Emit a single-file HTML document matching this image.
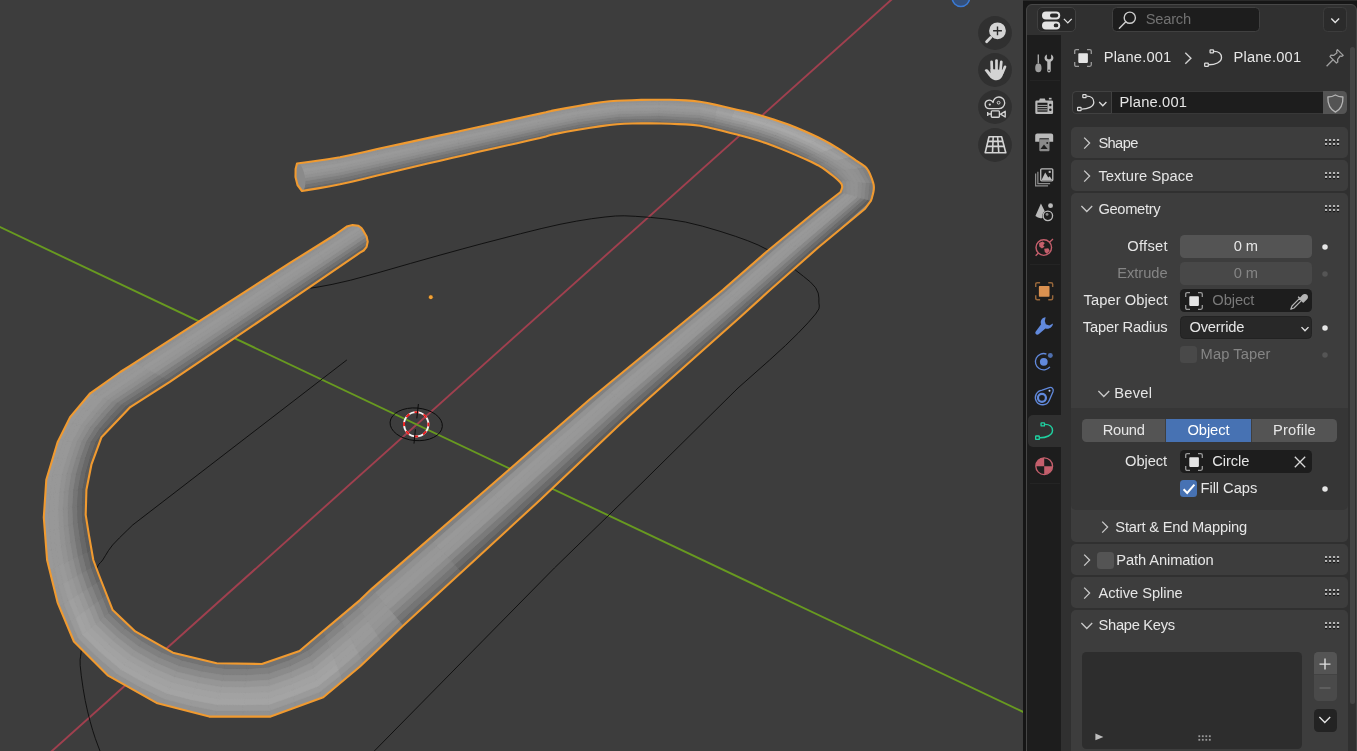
<!DOCTYPE html>
<html>
<head>
<meta charset="utf-8">
<title>Blender</title>
<style>
*{box-sizing:border-box;margin:0;padding:0}
html,body{width:1357px;height:751px;overflow:hidden;background:#181818;font-family:"Liberation Sans",sans-serif;font-size:14.7px;color:#e6e6e6}
.abs{position:absolute}
#vp{position:absolute;left:0;top:0;width:1023px;height:751px;background:#3d3d3d;overflow:hidden}
#gap{position:absolute;left:1023px;top:0;width:4px;height:751px;background:#161616}
#topgap{position:absolute;left:1023px;top:0;width:334px;height:4px;background:#161616;border-top:1px solid #2a2a2a}
#props{position:absolute;left:1026px;top:4px;width:331px;height:760px;background:#303030;border:1px solid #474747;border-radius:6px 6px 0 0;overflow:hidden}
#tabs{position:absolute;left:1027px;top:35px;width:34px;height:716px;background:#1d1d1d}
.t{position:absolute;white-space:nowrap;line-height:18px;height:18px}
.r{text-align:right}
.dis{color:#858585}
.panel{position:absolute;left:1071px;width:277px;background:#3d3d3d;border-radius:5px}
.fld{position:absolute;border-radius:4.5px;height:23.5px}
.dot{position:absolute;width:5.4px;height:5.4px;border-radius:50%;background:#e6e6e6}
.grip{position:absolute;left:1325px;width:15px;height:7px}
svg{position:absolute;overflow:visible}
</style>
</head>
<body>
<div id="vp">
<svg id="scene" width="1023" height="751" viewBox="0 0 1023 751" style="left:0;top:0">
<defs><clipPath id="tc"><path d="M297.0,163.5 L304.6,162.5 L315.4,161.0 L327.8,159.2 L340.0,157.2 L352.0,154.8 L364.6,152.0 L377.3,149.1 L390.0,146.3 L402.5,143.6 L415.1,140.9 L427.7,138.1 L440.2,135.4 L452.7,132.7 L465.1,129.9 L477.5,127.2 L490.0,124.5 L503.3,121.6 L517.1,118.6 L529.8,115.8 L540.0,113.6 L545.9,112.3 L548.8,111.5 L551.4,110.9 L556.8,109.9 L566.3,108.1 L578.1,106.0 L590.3,103.9 L601.1,102.3 L609.6,101.3 L616.9,100.8 L624.1,100.5 L632.0,100.2 L641.3,99.9 L651.2,99.7 L661.2,99.7 L670.3,99.8 L678.3,100.0 L685.7,100.4 L692.8,100.9 L700.0,101.8 L707.4,103.0 L714.8,104.6 L722.1,106.3 L729.5,108.0 L736.9,109.7 L744.3,111.3 L751.6,113.1 L759.0,115.1 L766.4,117.2 L773.7,119.5 L781.0,122.0 L788.4,124.6 L795.9,127.5 L803.6,130.7 L811.0,134.0 L817.9,137.2 L824.1,140.4 L829.8,143.5 L835.1,146.7 L840.0,149.7 L844.6,152.6 L848.8,155.5 L852.7,158.2 L856.2,160.7 L859.3,162.7 L862.0,164.4 L864.4,166.1 L866.5,168.1 L868.2,170.5 L869.6,173.2 L870.7,175.9 L871.7,178.4 L872.5,180.7 L873.2,182.9 L873.7,185.1 L873.9,187.3 L873.8,189.6 L873.4,192.0 L872.9,194.2 L872.4,196.1 L872.0,197.6 L871.6,198.9 L871.2,199.9 L871.0,200.6 L865.1,208.7 L817.9,247.8 L770.0,290.0 L740.0,317.3 L646.9,400.0 L620.0,424.3 L540.0,500.0 L474.8,560.0 L403.0,625.8 L360.0,666.5 L323.3,697.3 L270.6,716.6 L209.2,716.6 L156.6,702.9 L107.7,675.3 L73.9,641.5 L57.6,602.6 L47.1,560.0 L43.8,517.4 L46.3,479.8 L57.6,442.2 L70.1,417.1 L90.2,393.3 L120.3,372.0 L130.0,365.8 L290.0,262.9 L334.7,235.0 L346.7,226.6 L352.6,225.1 L358.5,225.8 L361.5,228.0 L363.7,231.4 L366.6,236.5 L367.7,241.7 L366.6,246.8 L363.7,250.5 L360.0,252.7 L303.4,291.4 L169.8,381.9 L130.3,407.1 L101.5,437.2 L91.4,464.7 L86.4,489.8 L85.7,514.9 L88.9,534.9 L93.3,560.0 L98.9,575.0 L112.7,610.1 L135.3,631.4 L172.9,652.7 L216.7,663.3 L261.9,664.0 L299.5,651.0 L360.0,600.1 L372.0,588.6 L474.2,500.0 L589.0,400.0 L722.8,290.0 L767.8,250.7 L817.9,209.5 L840.0,192.5 L840.1,192.5 L840.3,192.4 L840.5,192.2 L840.7,191.7 L841.1,190.7 L841.6,189.3 L842.1,187.8 L842.2,186.5 L842.0,185.4 L841.7,184.4 L841.0,183.3 L840.0,182.1 L838.7,180.7 L837.1,179.2 L835.1,177.5 L832.6,175.5 L829.8,173.3 L826.6,170.8 L822.8,168.1 L817.9,165.2 L811.6,162.0 L804.1,158.6 L796.1,155.1 L788.4,151.9 L781.0,148.9 L773.7,146.0 L766.4,143.3 L759.0,140.8 L751.6,138.5 L744.3,136.5 L736.9,134.6 L729.5,132.7 L722.1,130.8 L714.8,128.9 L707.4,127.2 L700.0,125.8 L692.8,124.9 L685.7,124.4 L678.3,124.1 L670.3,123.8 L661.2,123.5 L651.2,123.4 L641.3,123.3 L632.0,123.5 L624.1,123.8 L616.9,124.3 L609.6,125.0 L601.1,126.1 L590.3,127.7 L578.1,129.7 L566.3,131.8 L556.8,133.6 L551.4,134.8 L548.8,135.6 L545.9,136.5 L540.0,138.0 L529.8,140.3 L517.1,143.2 L503.3,146.3 L490.0,149.3 L477.5,152.1 L465.1,155.0 L452.7,157.8 L440.2,160.7 L427.7,163.6 L415.1,166.6 L402.5,169.5 L390.0,172.5 L377.2,175.6 L364.2,178.7 L351.7,181.7 L340.0,184.3 L328.8,186.5 L317.9,188.4 L308.5,189.9 L302.0,191.0 L297.5,185.0 L295.5,177.0 L295.6,169.0 Z"/></clipPath></defs>
<path d="M40.0,761.7 L900.0,-8.0" stroke="#a0404f" stroke-width="1.9" fill="none"/>
<path d="M-5.0,224.7 L1030.0,715.2" stroke="#689a20" stroke-width="1.9" fill="none"/>
<path d="M310.5,288.2 L319.1,286.8 L332.1,284.4 L350.6,280.2 L377.8,272.8 L410.6,263.4 L440.0,255.1 L462.2,249.0 L481.1,243.9 L500.0,239.0 L520.6,233.7 L541.1,228.6 L560.0,224.3 L576.7,221.1 L591.7,218.7 L605.0,217.0 L615.4,216.0 L624.2,215.8 L635.2,216.3 L650.4,217.4 L667.9,219.2 L685.3,222.0 L702.6,226.2 L720.0,231.3 L735.4,236.3 L747.7,240.7 L758.2,245.0 L768.0,250.0 L777.9,256.4 L787.1,263.4 L795.6,270.2 L803.4,276.3 L810.5,282.1 L815.6,287.7 L818.2,293.1 L818.9,298.1 L818.9,302.8 L819.3,306.1 L818.9,308.9 L815.6,314.0 L808.2,322.6 L797.9,333.4 L785.6,345.4 L769.3,360.3 L751.0,376.5 L738.0,388.0 L640.0,484.8 L554.4,568.0 L374.3,751.0" stroke="#0c0c0c" stroke-width="0.9" fill="none"/>
<path d="M346.9,359.9 L132.8,524.9 L127.2,530.3 L119.4,537.9 L112.7,544.9 L108.5,550.5 L105.4,555.6 L102.7,560.0 L100.5,562.6 L98.7,564.4 L96.4,568.8 L92.7,576.9 L88.4,587.5 L85.0,600.0 L83.1,616.2 L82.1,634.4 L81.4,649.0 L80.6,656.2 L80.1,659.7 L80.2,665.3 L81.3,675.8 L83.1,688.4 L85.2,700.4 L87.5,711.1 L90.1,721.3 L92.7,730.4 L95.4,738.7 L98.1,746.0 L100.0,751.0" stroke="#0c0c0c" stroke-width="0.9" fill="none"/>
<path d="M297.0,163.5 L304.6,162.5 L315.4,161.0 L327.8,159.2 L340.0,157.2 L352.0,154.8 L364.6,152.0 L377.3,149.1 L390.0,146.3 L402.5,143.6 L415.1,140.9 L427.7,138.1 L440.2,135.4 L452.7,132.7 L465.1,129.9 L477.5,127.2 L490.0,124.5 L503.3,121.6 L517.1,118.6 L529.8,115.8 L540.0,113.6 L545.9,112.3 L548.8,111.5 L551.4,110.9 L556.8,109.9 L566.3,108.1 L578.1,106.0 L590.3,103.9 L601.1,102.3 L609.6,101.3 L616.9,100.8 L624.1,100.5 L632.0,100.2 L641.3,99.9 L651.2,99.7 L661.2,99.7 L670.3,99.8 L678.3,100.0 L685.7,100.4 L692.8,100.9 L700.0,101.8 L707.4,103.0 L714.8,104.6 L722.1,106.3 L729.5,108.0 L736.9,109.7 L744.3,111.3 L751.6,113.1 L759.0,115.1 L766.4,117.2 L773.7,119.5 L781.0,122.0 L788.4,124.6 L795.9,127.5 L803.6,130.7 L811.0,134.0 L817.9,137.2 L824.1,140.4 L829.8,143.5 L835.1,146.7 L840.0,149.7 L844.6,152.6 L848.8,155.5 L852.7,158.2 L856.2,160.7 L859.3,162.7 L862.0,164.4 L864.4,166.1 L866.5,168.1 L868.2,170.5 L869.6,173.2 L870.7,175.9 L871.7,178.4 L872.5,180.7 L873.2,182.9 L873.7,185.1 L873.9,187.3 L873.8,189.6 L873.4,192.0 L872.9,194.2 L872.4,196.1 L872.0,197.6 L871.6,198.9 L871.2,199.9 L871.0,200.6 L865.1,208.7 L817.9,247.8 L770.0,290.0 L740.0,317.3 L646.9,400.0 L620.0,424.3 L540.0,500.0 L474.8,560.0 L403.0,625.8 L360.0,666.5 L323.3,697.3 L270.6,716.6 L209.2,716.6 L156.6,702.9 L107.7,675.3 L73.9,641.5 L57.6,602.6 L47.1,560.0 L43.8,517.4 L46.3,479.8 L57.6,442.2 L70.1,417.1 L90.2,393.3 L120.3,372.0 L130.0,365.8 L290.0,262.9 L334.7,235.0 L346.7,226.6 L352.6,225.1 L358.5,225.8 L361.5,228.0 L363.7,231.4 L366.6,236.5 L367.7,241.7 L366.6,246.8 L363.7,250.5 L360.0,252.7 L303.4,291.4 L169.8,381.9 L130.3,407.1 L101.5,437.2 L91.4,464.7 L86.4,489.8 L85.7,514.9 L88.9,534.9 L93.3,560.0 L98.9,575.0 L112.7,610.1 L135.3,631.4 L172.9,652.7 L216.7,663.3 L261.9,664.0 L299.5,651.0 L360.0,600.1 L372.0,588.6 L474.2,500.0 L589.0,400.0 L722.8,290.0 L767.8,250.7 L817.9,209.5 L840.0,192.5 L840.1,192.5 L840.3,192.4 L840.5,192.2 L840.7,191.7 L841.1,190.7 L841.6,189.3 L842.1,187.8 L842.2,186.5 L842.0,185.4 L841.7,184.4 L841.0,183.3 L840.0,182.1 L838.7,180.7 L837.1,179.2 L835.1,177.5 L832.6,175.5 L829.8,173.3 L826.6,170.8 L822.8,168.1 L817.9,165.2 L811.6,162.0 L804.1,158.6 L796.1,155.1 L788.4,151.9 L781.0,148.9 L773.7,146.0 L766.4,143.3 L759.0,140.8 L751.6,138.5 L744.3,136.5 L736.9,134.6 L729.5,132.7 L722.1,130.8 L714.8,128.9 L707.4,127.2 L700.0,125.8 L692.8,124.9 L685.7,124.4 L678.3,124.1 L670.3,123.8 L661.2,123.5 L651.2,123.4 L641.3,123.3 L632.0,123.5 L624.1,123.8 L616.9,124.3 L609.6,125.0 L601.1,126.1 L590.3,127.7 L578.1,129.7 L566.3,131.8 L556.8,133.6 L551.4,134.8 L548.8,135.6 L545.9,136.5 L540.0,138.0 L529.8,140.3 L517.1,143.2 L503.3,146.3 L490.0,149.3 L477.5,152.1 L465.1,155.0 L452.7,157.8 L440.2,160.7 L427.7,163.6 L415.1,166.6 L402.5,169.5 L390.0,172.5 L377.2,175.6 L364.2,178.7 L351.7,181.7 L340.0,184.3 L328.8,186.5 L317.9,188.4 L308.5,189.9 L302.0,191.0 L297.5,185.0 L295.5,177.0 L295.6,169.0 Z" fill="#8c8c8c"/>
<g clip-path="url(#tc)" stroke-width="0.6">
<path d="M91.7,550.7 L88.9,535.1 L84.2,536.9 L87.0,552.8 Z M88.9,535.1 L86.4,519.5 L81.8,521.0 L84.2,536.9 Z M86.4,519.5 L86.0,503.8 L81.3,504.9 L81.8,521.0 Z M86.0,503.8 L86.7,488.1 L82.1,488.8 L81.3,504.9 Z M86.7,488.1 L89.8,472.6 L85.1,473.0 L82.1,488.8 Z M89.8,472.6 L94.1,457.4 L89.5,457.5 L85.1,473.0 Z M94.1,457.4 L99.5,442.6 L95.0,442.3 L89.5,457.5 Z M99.5,442.6 L108.5,429.9 L103.9,429.2 L95.0,442.3 Z M108.5,429.9 L119.4,418.5 L114.8,417.3 L103.9,429.2 Z M119.4,418.5 L130.3,407.1 L125.8,405.6 L114.8,417.3 Z" fill="#5c5c5c" stroke="#5c5c5c"/>
<path d="M867.6,199.7 L808.5,251.5 L812.1,252.9 L871.0,200.6 Z M808.5,251.5 L749.6,303.8 L753.0,305.5 L812.1,252.9 Z M749.6,303.8 L690.6,356.1 L694.0,358.2 L753.0,305.5 Z M690.6,356.1 L631.5,408.2 L635.0,410.8 L694.0,358.2 Z M631.5,408.2 L573.7,461.8 L577.2,464.8 L635.0,410.8 Z M573.7,461.8 L516.0,515.4 L519.5,518.9 L577.2,464.8 Z M516.0,515.4 L457.8,568.6 L461.3,572.4 L519.5,518.9 Z" fill="#5d5d5d" stroke="#5d5d5d"/>
<path d="M130.3,407.1 L171.2,380.9 L167.1,379.0 L125.8,405.6 Z" fill="#5e5e5e" stroke="#5e5e5e"/>
<path d="M95.5,565.9 L91.7,550.7 L87.0,552.8 L90.9,568.4 Z" fill="#606060" stroke="#606060"/>
<path d="M171.2,380.9 L211.4,353.7 L207.8,351.5 L167.1,379.0 Z M211.4,353.7 L251.6,326.5 L248.5,324.1 L207.8,351.5 Z M251.6,326.5 L291.8,299.3 L289.3,296.7 L248.5,324.1 Z M291.8,299.3 L331.9,271.9 L329.9,269.2 L289.3,296.7 Z M331.9,271.9 L372.0,244.5 L370.6,241.6 L329.9,269.2 Z" fill="#616161" stroke="#616161"/>
<path d="M101.1,580.7 L95.5,565.9 L90.9,568.4 L96.5,583.6 Z" fill="#656565" stroke="#656565"/>
<path d="M302.0,191.0 L341.9,183.9 L341.4,181.0 L301.4,187.9 Z M341.9,183.9 L381.3,174.6 L380.9,171.7 L341.4,181.0 Z M381.3,174.6 L420.8,165.2 L420.4,162.5 L380.9,171.7 Z M420.8,165.2 L460.3,156.1 L460.0,153.4 L420.4,162.5 Z M460.3,156.1 L499.8,147.1 L499.5,144.4 L460.0,153.4 Z M499.8,147.1 L539.3,138.2 L539.1,135.5 L499.5,144.4 Z M539.3,138.2 L578.9,129.6 L578.8,127.0 L539.1,135.5 Z M578.9,129.6 L619.0,124.2 L619.0,121.6 L578.8,127.0 Z M619.0,124.2 L659.6,123.5 L659.5,120.9 L619.0,121.6 Z M659.6,123.5 L700.0,125.8 L700.0,123.1 L659.5,120.9 Z M700.0,125.8 L713.4,128.6 L713.9,126.0 L700.0,123.1 Z M87.0,552.8 L84.2,536.9 L79.5,538.8 L82.3,555.0 Z M84.2,536.9 L81.8,521.0 L77.2,522.4 L79.5,538.8 Z M81.8,521.0 L81.3,504.9 L76.7,506.0 L77.2,522.4 Z M81.3,504.9 L82.1,488.8 L77.5,489.6 L76.7,506.0 Z M82.1,488.8 L85.1,473.0 L80.4,473.4 L77.5,489.6 Z M85.1,473.0 L89.5,457.5 L84.9,457.5 L80.4,473.4 Z M89.5,457.5 L95.0,442.3 L90.4,442.0 L84.9,457.5 Z M95.0,442.3 L103.9,429.2 L99.3,428.4 L90.4,442.0 Z M103.9,429.2 L114.8,417.3 L110.2,416.1 L99.3,428.4 Z M114.8,417.3 L125.8,405.6 L121.4,404.0 L110.2,416.1 Z" fill="#686868" stroke="#686868"/>
<path d="M457.8,568.6 L399.6,621.7 L403.0,625.8 L461.3,572.4 Z" fill="#696969" stroke="#696969"/>
<path d="M713.4,128.6 L726.7,132.0 L727.6,129.4 L713.9,126.0 Z" fill="#6a6a6a" stroke="#6a6a6a"/>
<path d="M864.1,198.8 L805.0,250.2 L808.5,251.5 L867.6,199.7 Z M805.0,250.2 L746.1,302.2 L749.6,303.8 L808.5,251.5 Z M746.1,302.2 L687.1,353.9 L690.6,356.1 L749.6,303.8 Z M687.1,353.9 L628.0,405.7 L631.5,408.2 L690.6,356.1 Z M628.0,405.7 L570.2,458.8 L573.7,461.8 L631.5,408.2 Z M570.2,458.8 L512.5,512.0 L516.0,515.4 L573.7,461.8 Z M512.5,512.0 L454.3,564.8 L457.8,568.6 L516.0,515.4 Z M106.9,595.4 L101.1,580.7 L96.5,583.6 L102.4,598.6 Z M125.8,405.6 L167.1,379.0 L163.0,377.0 L121.4,404.0 Z" fill="#6b6b6b" stroke="#6b6b6b"/>
<path d="M726.7,132.0 L739.9,135.4 L741.3,132.9 L727.6,129.4 Z M90.9,568.4 L87.0,552.8 L82.3,555.0 L86.3,570.9 Z" fill="#6c6c6c" stroke="#6c6c6c"/>
<path d="M739.9,135.4 L753.1,139.0 L755.0,136.7 L741.3,132.9 Z M753.1,139.0 L766.1,143.2 L768.4,141.1 L755.0,136.7 Z M766.1,143.2 L778.9,148.1 L781.7,146.1 L768.4,141.1 Z M778.9,148.1 L791.6,153.2 L794.7,151.6 L781.7,146.1 Z" fill="#6d6d6d" stroke="#6d6d6d"/>
<path d="M791.6,153.2 L804.2,158.6 L807.7,157.4 L794.7,151.6 Z" fill="#6e6e6e" stroke="#6e6e6e"/>
<path d="M112.7,610.1 L106.9,595.4 L102.4,598.6 L108.4,613.6 Z M167.1,379.0 L207.8,351.5 L204.2,349.4 L163.0,377.0 Z M207.8,351.5 L248.5,324.1 L245.5,321.8 L204.2,349.4 Z M248.5,324.1 L289.3,296.7 L286.7,294.2 L245.5,321.8 Z M289.3,296.7 L329.9,269.2 L328.0,266.5 L286.7,294.2 Z M329.9,269.2 L370.6,241.6 L369.1,238.8 L328.0,266.5 Z" fill="#707070" stroke="#707070"/>
<path d="M96.5,583.6 L90.9,568.4 L86.3,570.9 L91.8,586.5 Z" fill="#727272" stroke="#727272"/>
<path d="M301.4,187.9 L341.4,181.0 L340.9,178.0 L300.9,184.9 Z M341.4,181.0 L380.9,171.7 L380.5,168.9 L340.9,178.0 Z M380.9,171.7 L420.4,162.5 L420.1,159.7 L380.5,168.9 Z M420.4,162.5 L460.0,153.4 L459.7,150.6 L420.1,159.7 Z M460.0,153.4 L499.5,144.4 L499.3,141.7 L459.7,150.6 Z M499.5,144.4 L539.1,135.5 L538.9,132.8 L499.3,141.7 Z M539.1,135.5 L578.8,127.0 L578.6,124.4 L538.9,132.8 Z M578.8,127.0 L619.0,121.6 L618.9,119.0 L578.6,124.4 Z M619.0,121.6 L659.5,120.9 L659.5,118.2 L618.9,119.0 Z M659.5,120.9 L700.0,123.1 L700.0,120.5 L659.5,118.2 Z M700.0,123.1 L713.9,126.0 L714.3,123.4 L700.0,120.5 Z M804.2,158.6 L816.5,164.5 L820.3,163.7 L807.7,157.4 Z M323.5,630.8 L307.1,644.6 L308.7,650.5 L325.6,636.4 Z M307.1,644.6 L288.7,654.7 L289.4,660.6 L308.7,650.5 Z M288.7,654.7 L268.4,661.7 L268.6,667.8 L289.4,660.6 Z M268.4,661.7 L247.4,663.8 L246.8,669.6 L268.6,667.8 Z M247.4,663.8 L225.9,663.4 L224.7,669.3 L246.8,669.6 Z M225.9,663.4 L204.9,660.4 L203.0,666.1 L224.7,669.3 Z M204.9,660.4 L184.0,655.4 L181.6,660.8 L203.0,666.1 Z M184.0,655.4 L164.2,647.8 L161.3,652.7 L181.6,660.8 Z M164.2,647.8 L145.6,637.2 L142.0,641.8 L161.3,652.7 Z M145.6,637.2 L128.3,624.8 L124.4,628.8 L142.0,641.8 Z M128.3,624.8 L112.7,610.1 L108.4,613.6 L124.4,628.8 Z" fill="#737373" stroke="#737373"/>
<path d="M713.9,126.0 L727.6,129.4 L728.5,126.9 L714.3,123.4 Z M454.3,564.8 L396.1,617.5 L399.6,621.7 L457.8,568.6 Z M82.3,555.0 L79.5,538.8 L74.8,540.6 L77.6,557.1 Z M79.5,538.8 L77.2,522.4 L72.6,523.9 L74.8,540.6 Z M77.2,522.4 L76.7,506.0 L72.0,507.1 L72.6,523.9 Z M76.7,506.0 L77.5,489.6 L72.9,490.3 L72.0,507.1 Z M77.5,489.6 L80.4,473.4 L75.7,473.7 L72.9,490.3 Z M80.4,473.4 L84.9,457.5 L80.3,457.6 L75.7,473.7 Z M84.9,457.5 L90.4,442.0 L85.9,441.7 L80.3,457.6 Z M90.4,442.0 L99.3,428.4 L94.7,427.6 L85.9,441.7 Z M99.3,428.4 L110.2,416.1 L105.6,414.9 L94.7,427.6 Z M110.2,416.1 L121.4,404.0 L116.9,402.5 L105.6,414.9 Z" fill="#757575" stroke="#757575"/>
<path d="M727.6,129.4 L741.3,132.9 L742.7,130.5 L728.5,126.9 Z" fill="#767676" stroke="#767676"/>
<path d="M741.3,132.9 L755.0,136.7 L756.8,134.4 L742.7,130.5 Z M755.0,136.7 L768.4,141.1 L770.7,139.0 L756.8,134.4 Z M768.4,141.1 L781.7,146.1 L784.4,144.2 L770.7,139.0 Z M781.7,146.1 L794.7,151.6 L797.9,149.9 L784.4,144.2 Z M869.4,182.8 L867.6,199.7 L871.0,200.6 L873.2,183.1 Z" fill="#777777" stroke="#777777"/>
<path d="M794.7,151.6 L807.7,157.4 L811.2,156.1 L797.9,149.9 Z M816.5,164.5 L828.0,171.9 L832.2,171.3 L820.3,163.7 Z M339.9,617.0 L323.5,630.8 L325.6,636.4 L342.5,622.1 Z M102.4,598.6 L96.5,583.6 L91.8,586.5 L98.0,601.8 Z M121.4,404.0 L163.0,377.0 L158.9,375.0 L116.9,402.5 Z" fill="#787878" stroke="#787878"/>
<path d="M86.3,570.9 L82.3,555.0 L77.6,557.1 L81.7,573.4 Z" fill="#797979" stroke="#797979"/>
<path d="M860.7,197.9 L801.5,248.8 L805.0,250.2 L864.1,198.8 Z M801.5,248.8 L742.7,300.5 L746.1,302.2 L805.0,250.2 Z M742.7,300.5 L683.7,351.8 L687.1,353.9 L746.1,302.2 Z M683.7,351.8 L624.6,403.1 L628.0,405.7 L687.1,353.9 Z M624.6,403.1 L566.7,455.8 L570.2,458.8 L628.0,405.7 Z M566.7,455.8 L508.9,508.6 L512.5,512.0 L570.2,458.8 Z M508.9,508.6 L450.8,561.0 L454.3,564.8 L512.5,512.0 Z" fill="#7a7a7a" stroke="#7a7a7a"/>
<path d="M807.7,157.4 L820.3,163.7 L824.1,162.8 L811.2,156.1 Z M828.0,171.9 L838.6,180.6 L842.4,180.9 L832.2,171.3 Z M356.3,603.2 L339.9,617.0 L342.5,622.1 L359.3,607.8 Z M108.4,613.6 L102.4,598.6 L98.0,601.8 L104.1,617.1 Z M163.0,377.0 L204.2,349.4 L200.7,347.2 L158.9,375.0 Z M204.2,349.4 L245.5,321.8 L242.4,319.4 L200.7,347.2 Z M245.5,321.8 L286.7,294.2 L284.2,291.6 L242.4,319.4 Z M286.7,294.2 L328.0,266.5 L326.0,263.9 L284.2,291.6 Z M328.0,266.5 L369.1,238.8 L367.7,235.9 L326.0,263.9 Z" fill="#7d7d7d" stroke="#7d7d7d"/>
<path d="M300.9,184.9 L340.9,178.0 L340.4,175.1 L300.3,181.8 Z M340.9,178.0 L380.5,168.9 L380.1,166.1 L340.4,175.1 Z M380.5,168.9 L420.1,159.7 L419.7,156.9 L380.1,166.1 Z M420.1,159.7 L459.7,150.6 L459.4,147.9 L419.7,156.9 Z M459.7,150.6 L499.3,141.7 L499.0,139.0 L459.4,147.9 Z M499.3,141.7 L538.9,132.8 L538.7,130.1 L499.0,139.0 Z M538.9,132.8 L578.6,124.4 L578.5,121.8 L538.7,130.1 Z M578.6,124.4 L618.9,119.0 L618.8,116.4 L578.5,121.8 Z M618.9,119.0 L659.5,118.2 L659.4,115.6 L618.8,116.4 Z M659.5,118.2 L700.0,120.5 L700.0,117.8 L659.4,115.6 Z M91.8,586.5 L86.3,570.9 L81.7,573.4 L87.2,589.3 Z" fill="#7e7e7e" stroke="#7e7e7e"/>
<path d="M700.0,120.5 L714.3,123.4 L714.8,120.8 L700.0,117.8 Z M399.6,621.7 L380.2,640.0 L383.1,644.6 L403.0,625.8 Z" fill="#7f7f7f" stroke="#7f7f7f"/>
<path d="M714.3,123.4 L728.5,126.9 L729.5,124.4 L714.8,120.8 Z M865.5,182.5 L864.1,198.8 L867.6,199.7 L869.4,182.8 Z M325.6,636.4 L308.7,650.5 L310.2,656.5 L327.7,642.0 Z M308.7,650.5 L289.4,660.6 L290.2,666.5 L310.2,656.5 Z M289.4,660.6 L268.6,667.8 L268.7,673.9 L290.2,666.5 Z M268.6,667.8 L246.8,669.6 L246.3,675.5 L268.7,673.9 Z M246.8,669.6 L224.7,669.3 L223.5,675.3 L246.3,675.5 Z M224.7,669.3 L203.0,666.1 L201.2,671.7 L223.5,675.3 Z M203.0,666.1 L181.6,660.8 L179.1,666.3 L201.2,671.7 Z M181.6,660.8 L161.3,652.7 L158.3,657.6 L179.1,666.3 Z M161.3,652.7 L142.0,641.8 L138.5,646.4 L158.3,657.6 Z M142.0,641.8 L124.4,628.8 L120.5,632.8 L138.5,646.4 Z M124.4,628.8 L108.4,613.6 L104.1,617.1 L120.5,632.8 Z" fill="#808080" stroke="#808080"/>
<path d="M728.5,126.9 L742.7,130.5 L744.2,128.0 L729.5,124.4 Z M861.3,167.6 L869.4,182.8 L873.2,183.1 L865.4,167.1 Z M840.0,192.5 L780.2,240.5 L783.8,241.9 L843.4,193.4 Z M780.2,240.5 L722.2,290.5 L725.6,292.2 L783.8,241.9 Z M722.2,290.5 L663.0,339.2 L666.4,341.3 L725.6,292.2 Z M663.0,339.2 L603.8,387.9 L607.2,390.4 L666.4,341.3 Z M603.8,387.9 L545.6,437.8 L549.1,440.8 L607.2,390.4 Z M545.6,437.8 L487.8,488.1 L491.3,491.6 L549.1,440.8 Z M487.8,488.1 L429.9,538.4 L433.4,542.2 L491.3,491.6 Z M450.8,561.0 L392.7,613.4 L396.1,617.5 L454.3,564.8 Z" fill="#818181" stroke="#818181"/>
<path d="M742.7,130.5 L756.8,134.4 L758.7,132.1 L744.2,128.0 Z M756.8,134.4 L770.7,139.0 L773.1,136.8 L758.7,132.1 Z M770.7,139.0 L784.4,144.2 L787.2,142.3 L773.1,136.8 Z M784.4,144.2 L797.9,149.9 L801.0,148.2 L787.2,142.3 Z M820.3,163.7 L832.2,171.3 L836.3,170.8 L824.1,162.8 Z M838.6,180.6 L840.0,192.5 L843.4,193.4 L842.4,180.9 Z M429.9,538.4 L372.0,588.6 L375.4,592.7 L433.4,542.2 Z M372.0,588.6 L356.3,603.2 L359.3,607.8 L375.4,592.7 Z" fill="#828282" stroke="#828282"/>
<path d="M797.9,149.9 L811.2,156.1 L814.7,154.8 L801.0,148.2 Z M77.6,557.1 L74.8,540.6 L70.1,542.4 L73.0,559.3 Z M74.8,540.6 L72.6,523.9 L68.0,525.3 L70.1,542.4 Z M72.6,523.9 L72.0,507.1 L67.4,508.2 L68.0,525.3 Z M72.0,507.1 L72.9,490.3 L68.3,491.1 L67.4,508.2 Z M72.9,490.3 L75.7,473.7 L71.0,474.1 L68.3,491.1 Z M75.7,473.7 L80.3,457.6 L75.8,457.7 L71.0,474.1 Z M80.3,457.6 L85.9,441.7 L81.4,441.4 L75.8,457.7 Z M85.9,441.7 L94.7,427.6 L90.1,426.9 L81.4,441.4 Z M94.7,427.6 L105.6,414.9 L101.0,413.7 L90.1,426.9 Z M105.6,414.9 L116.9,402.5 L112.5,401.0 L101.0,413.7 Z" fill="#838383" stroke="#838383"/>
<path d="M342.5,622.1 L325.6,636.4 L327.7,642.0 L345.1,627.3 Z M98.0,601.8 L91.8,586.5 L87.2,589.3 L93.5,604.9 Z" fill="#848484" stroke="#848484"/>
<path d="M380.2,640.0 L360.7,658.2 L363.3,663.4 L383.1,644.6 Z M116.9,402.5 L158.9,375.0 L154.8,373.0 L112.5,401.0 Z" fill="#858585" stroke="#858585"/>
<path d="M811.2,156.1 L824.1,162.8 L827.9,161.9 L814.7,154.8 Z M832.2,171.3 L842.4,180.9 L846.3,181.1 L836.3,170.8 Z M81.7,573.4 L77.6,557.1 L73.0,559.3 L77.1,575.9 Z" fill="#868686" stroke="#868686"/>
<path d="M857.1,168.1 L865.5,182.5 L869.4,182.8 L861.3,167.6 Z M861.7,182.2 L860.7,197.9 L864.1,198.8 L865.5,182.5 Z M857.2,197.0 L797.9,247.4 L801.5,248.8 L860.7,197.9 Z M797.9,247.4 L739.3,298.8 L742.7,300.5 L801.5,248.8 Z M739.3,298.8 L680.2,349.7 L683.7,351.8 L742.7,300.5 Z M680.2,349.7 L621.1,400.6 L624.6,403.1 L683.7,351.8 Z M621.1,400.6 L563.2,452.8 L566.7,455.8 L624.6,403.1 Z M563.2,452.8 L505.4,505.2 L508.9,508.6 L566.7,455.8 Z M505.4,505.2 L447.4,557.3 L450.8,561.0 L508.9,508.6 Z M396.1,617.5 L377.2,635.4 L380.2,640.0 L399.6,621.7 Z" fill="#888888" stroke="#888888"/>
<path d="M824.1,162.8 L836.3,170.8 L840.5,170.3 L827.9,161.9 Z M359.3,607.8 L342.5,622.1 L345.1,627.3 L362.3,612.4 Z M104.1,617.1 L98.0,601.8 L93.5,604.9 L99.8,620.6 Z" fill="#898989" stroke="#898989"/>
<path d="M300.3,181.8 L340.4,175.1 L339.9,172.2 L299.8,178.8 Z M340.4,175.1 L380.1,166.1 L379.7,163.2 L339.9,172.2 Z M380.1,166.1 L419.7,156.9 L419.3,154.2 L379.7,163.2 Z M419.7,156.9 L459.4,147.9 L459.1,145.2 L419.3,154.2 Z M459.4,147.9 L499.0,139.0 L498.8,136.3 L459.1,145.2 Z M499.0,139.0 L538.7,130.1 L538.5,127.5 L498.8,136.3 Z M538.7,130.1 L578.5,121.8 L578.3,119.1 L538.5,127.5 Z M578.5,121.8 L618.8,116.4 L618.7,113.8 L578.3,119.1 Z M618.8,116.4 L659.4,115.6 L659.4,112.9 L618.7,113.8 Z M659.4,115.6 L700.0,117.8 L700.0,115.1 L659.4,112.9 Z M700.0,117.8 L714.8,120.8 L715.3,118.2 L700.0,115.1 Z M846.9,157.7 L861.3,167.6 L865.4,167.1 L850.7,156.8 Z" fill="#8a8a8a" stroke="#8a8a8a"/>
<path d="M842.4,180.9 L843.4,193.4 L846.9,194.3 L846.3,181.1 Z M360.7,658.2 L340.4,675.6 L342.5,681.2 L363.3,663.4 Z M327.7,642.0 L310.2,656.5 L311.8,662.4 L329.8,647.6 Z M310.2,656.5 L290.2,666.5 L290.9,672.3 L311.8,662.4 Z M290.2,666.5 L268.7,673.9 L268.9,680.0 L290.9,672.3 Z M268.7,673.9 L246.3,675.5 L245.7,681.4 L268.9,680.0 Z M246.3,675.5 L223.5,675.3 L222.3,681.2 L245.7,681.4 Z M223.5,675.3 L201.2,671.7 L199.4,677.3 L222.3,681.2 Z M201.2,671.7 L179.1,666.3 L176.6,671.7 L199.4,677.3 Z M179.1,666.3 L158.3,657.6 L155.3,662.6 L176.6,671.7 Z M158.3,657.6 L138.5,646.4 L135.0,651.0 L155.3,662.6 Z M138.5,646.4 L120.5,632.8 L116.6,636.8 L135.0,651.0 Z M120.5,632.8 L104.1,617.1 L99.8,620.6 L116.6,636.8 Z M87.2,589.3 L81.7,573.4 L77.1,575.9 L82.5,592.2 Z M158.9,375.0 L200.7,347.2 L197.1,345.0 L154.8,373.0 Z M200.7,347.2 L242.4,319.4 L239.4,317.1 L197.1,345.0 Z M242.4,319.4 L284.2,291.6 L281.7,289.1 L239.4,317.1 Z M284.2,291.6 L326.0,263.9 L324.0,261.2 L281.7,289.1 Z M326.0,263.9 L367.7,235.9 L366.2,233.1 L324.0,261.2 Z" fill="#8b8b8b" stroke="#8b8b8b"/>
<path d="M714.8,120.8 L729.5,124.4 L730.4,121.9 L715.3,118.2 Z M447.4,557.3 L389.2,609.3 L392.7,613.4 L450.8,561.0 Z" fill="#8c8c8c" stroke="#8c8c8c"/>
<path d="M729.5,124.4 L744.2,128.0 L745.6,125.6 L730.4,121.9 Z M836.3,170.8 L846.3,181.1 L850.1,181.4 L840.5,170.3 Z M857.8,182.0 L857.2,197.0 L860.7,197.9 L861.7,182.2 Z M375.4,592.7 L359.3,607.8 L362.3,612.4 L378.9,596.9 Z M73.0,559.3 L70.1,542.4 L65.3,544.2 L68.3,561.5 Z M70.1,542.4 L68.0,525.3 L63.4,526.8 L65.3,544.2 Z M68.0,525.3 L67.4,508.2 L62.7,509.3 L63.4,526.8 Z M67.4,508.2 L68.3,491.1 L63.7,491.8 L62.7,509.3 Z M68.3,491.1 L71.0,474.1 L66.3,474.5 L63.7,491.8 Z M71.0,474.1 L75.8,457.7 L71.2,457.7 L66.3,474.5 Z M75.8,457.7 L81.4,441.4 L76.8,441.2 L71.2,457.7 Z M81.4,441.4 L90.1,426.9 L85.5,426.1 L76.8,441.2 Z M90.1,426.9 L101.0,413.7 L96.4,412.5 L85.5,426.1 Z M101.0,413.7 L112.5,401.0 L108.0,399.4 L96.4,412.5 Z" fill="#8d8d8d" stroke="#8d8d8d"/>
<path d="M744.2,128.0 L758.7,132.1 L760.6,129.8 L745.6,125.6 Z M758.7,132.1 L773.1,136.8 L775.4,134.7 L760.6,129.8 Z M773.1,136.8 L787.2,142.3 L789.9,140.4 L775.4,134.7 Z M787.2,142.3 L801.0,148.2 L804.2,146.6 L789.9,140.4 Z M801.0,148.2 L814.7,154.8 L818.1,153.5 L804.2,146.6 Z M377.2,635.4 L358.1,653.1 L360.7,658.2 L380.2,640.0 Z M345.1,627.3 L327.7,642.0 L329.8,647.6 L347.7,632.5 Z" fill="#8e8e8e" stroke="#8e8e8e"/>
<path d="M814.7,154.8 L827.9,161.9 L831.7,161.1 L818.1,153.5 Z M93.5,604.9 L87.2,589.3 L82.5,592.2 L89.0,608.1 Z M112.5,401.0 L154.8,373.0 L150.7,371.0 L108.0,399.4 Z" fill="#8f8f8f" stroke="#8f8f8f"/>
<path d="M827.9,161.9 L840.5,170.3 L844.7,169.7 L831.7,161.1 Z M853.0,168.7 L861.7,182.2 L865.5,182.5 L857.1,168.1 Z M846.3,181.1 L846.9,194.3 L850.3,195.2 L850.1,181.4 Z M362.3,612.4 L345.1,627.3 L347.7,632.5 L365.3,617.0 Z M77.1,575.9 L73.0,559.3 L68.3,561.5 L72.5,578.4 Z M138.3,365.1 L182.7,336.4 L179.2,334.2 L134.2,363.1 Z M182.7,336.4 L227.2,307.6 L224.1,305.3 L179.2,334.2 Z M227.2,307.6 L271.6,278.9 L269.0,276.4 L224.1,305.3 Z M271.6,278.9 L316.1,250.5 L314.2,247.8 L269.0,276.4 Z M316.1,250.5 L360.4,221.7 L359.0,218.8 L314.2,247.8 Z" fill="#909090" stroke="#909090"/>
<path d="M843.1,158.5 L857.1,168.1 L861.3,167.6 L846.9,157.7 Z M840.5,170.3 L850.1,181.4 L854.0,181.7 L844.7,169.7 Z M433.4,542.2 L375.4,592.7 L378.9,596.9 L436.9,545.9 Z M392.7,613.4 L374.2,630.8 L377.2,635.4 L396.1,617.5 Z M340.4,675.6 L319.6,692.1 L321.1,698.1 L342.5,681.2 Z M319.6,692.1 L294.7,701.6 L295.5,707.5 L321.1,698.1 Z M294.7,701.6 L269.6,710.5 L269.7,716.6 L295.5,707.5 Z M269.6,710.5 L242.9,710.7 L242.4,716.6 L269.7,716.6 Z M242.9,710.7 L216.2,710.7 L215.0,716.6 L242.4,716.6 Z M216.2,710.7 L190.2,705.5 L188.4,711.2 L215.0,716.6 Z M190.2,705.5 L164.3,698.8 L161.9,704.3 L188.4,711.2 Z M164.3,698.8 L140.5,687.2 L137.5,692.1 L161.9,704.3 Z M140.5,687.2 L117.3,674.1 L113.7,678.7 L137.5,692.1 Z M117.3,674.1 L97.1,656.8 L93.2,660.8 L113.7,678.7 Z M97.1,656.8 L78.2,638.0 L73.9,641.5 L93.2,660.8 Z" fill="#919191" stroke="#919191"/>
<path d="M299.8,178.8 L339.9,172.2 L339.5,169.3 L299.2,175.7 Z M297.6,166.6 L338.0,160.5 L337.5,157.6 L297.0,163.5 Z M339.9,172.2 L379.7,163.2 L379.2,160.4 L339.5,169.3 Z M338.0,160.5 L378.0,151.9 L377.5,149.1 L337.5,157.6 Z M379.7,163.2 L419.3,154.2 L419.0,151.4 L379.2,160.4 Z M378.0,151.9 L417.9,143.1 L417.5,140.3 L377.5,149.1 Z M419.3,154.2 L459.1,145.2 L458.8,142.5 L419.0,151.4 Z M417.9,143.1 L457.8,134.3 L457.5,131.6 L417.5,140.3 Z M459.1,145.2 L498.8,136.3 L498.5,133.6 L458.8,142.5 Z M457.8,134.3 L497.8,125.5 L497.5,122.9 L457.5,131.6 Z M498.8,136.3 L538.5,127.5 L538.3,124.8 L498.5,133.6 Z M497.8,125.5 L537.7,116.8 L537.5,114.1 L497.5,122.9 Z M538.5,127.5 L578.3,119.1 L578.2,116.5 L538.3,124.8 Z M537.7,116.8 L577.8,108.7 L577.7,106.1 L537.5,114.1 Z M578.3,119.1 L618.7,113.8 L618.6,111.2 L578.2,116.5 Z M577.8,108.7 L618.3,103.3 L618.2,100.7 L577.7,106.1 Z M618.7,113.8 L659.4,112.9 L659.3,110.3 L618.6,111.2 Z M618.3,103.3 L659.2,102.3 L659.1,99.7 L618.2,100.7 Z M659.4,112.9 L700.0,115.1 L700.0,112.5 L659.3,110.3 Z M659.2,102.3 L700.0,104.5 L700.0,101.8 L659.1,99.7 Z M848.8,169.2 L857.8,182.0 L861.7,182.2 L853.0,168.7 Z M850.1,181.4 L850.3,195.2 L853.8,196.1 L854.0,181.7 Z M854.0,181.7 L853.8,196.1 L857.2,197.0 L857.8,182.0 Z M78.2,638.0 L71.1,620.9 L66.6,624.0 L73.9,641.5 Z" fill="#929292" stroke="#929292"/>
<path d="M700.0,115.1 L715.3,118.2 L715.8,115.6 L700.0,112.5 Z M844.7,169.7 L854.0,181.7 L857.8,182.0 L848.8,169.2 Z M843.4,193.4 L783.8,241.9 L787.3,243.2 L846.9,194.3 Z M783.8,241.9 L725.6,292.2 L729.0,293.8 L787.3,243.2 Z M725.6,292.2 L666.4,341.3 L669.9,343.4 L729.0,293.8 Z M666.4,341.3 L607.2,390.4 L610.7,393.0 L669.9,343.4 Z M607.2,390.4 L549.1,440.8 L552.6,443.8 L610.7,393.0 Z M549.1,440.8 L491.3,491.6 L494.9,495.0 L552.6,443.8 Z M491.3,491.6 L433.4,542.2 L436.9,545.9 L494.9,495.0 Z M378.9,596.9 L362.3,612.4 L365.3,617.0 L382.3,601.0 Z M68.3,561.5 L65.3,544.2 L60.6,546.0 L63.6,563.6 Z M65.3,544.2 L63.4,526.8 L58.8,528.2 L60.6,546.0 Z M63.4,526.8 L62.7,509.3 L58.0,510.4 L58.8,528.2 Z M62.7,509.3 L63.7,491.8 L59.1,492.6 L58.0,510.4 Z M63.7,491.8 L66.3,474.5 L61.5,474.9 L59.1,492.6 Z M66.3,474.5 L71.2,457.7 L66.6,457.8 L61.5,474.9 Z M71.2,457.7 L76.8,441.2 L72.3,440.9 L66.6,457.8 Z M76.8,441.2 L85.5,426.1 L80.9,425.4 L72.3,440.9 Z M85.5,426.1 L96.4,412.5 L91.8,411.3 L80.9,425.4 Z M96.4,412.5 L108.0,399.4 L103.6,397.9 L91.8,411.3 Z" fill="#939393" stroke="#939393"/>
<path d="M700.0,104.5 L717.2,107.8 L717.6,105.2 L700.0,101.8 Z M832.1,148.3 L846.9,157.7 L850.7,156.8 L835.6,147.0 Z M358.1,653.1 L338.3,670.0 L340.4,675.6 L360.7,658.2 Z M99.8,620.6 L93.5,604.9 L89.0,608.1 L95.5,624.1 Z M71.1,620.9 L63.9,603.7 L59.3,606.6 L66.6,624.0 Z M82.5,592.2 L77.1,575.9 L72.5,578.4 L77.9,595.1 Z M108.0,399.4 L150.7,371.0 L146.6,369.0 L103.6,397.9 Z M154.8,373.0 L197.1,345.0 L193.5,342.9 L150.7,371.0 Z M197.1,345.0 L239.4,317.1 L236.3,314.7 L193.5,342.9 Z M239.4,317.1 L281.7,289.1 L279.1,286.6 L236.3,314.7 Z M281.7,289.1 L324.0,261.2 L322.1,258.5 L279.1,286.6 Z M324.0,261.2 L366.2,233.1 L364.8,230.2 L322.1,258.5 Z" fill="#949494" stroke="#949494"/>
<path d="M715.3,118.2 L730.4,121.9 L731.4,119.4 L715.8,115.6 Z M831.7,161.1 L844.7,169.7 L848.8,169.2 L835.5,160.2 Z M389.2,609.3 L371.2,626.2 L374.2,630.8 L392.7,613.4 Z M142.5,367.0 L186.3,338.5 L182.7,336.4 L138.3,365.1 Z M186.3,338.5 L230.2,310.0 L227.2,307.6 L182.7,336.4 Z M230.2,310.0 L274.1,281.5 L271.6,278.9 L227.2,307.6 Z M274.1,281.5 L318.1,253.2 L316.1,250.5 L271.6,278.9 Z M318.1,253.2 L361.9,224.5 L360.4,221.7 L316.1,250.5 Z" fill="#959595" stroke="#959595"/>
<path d="M298.1,169.6 L338.5,163.5 L338.0,160.5 L297.6,166.6 Z M338.5,163.5 L378.4,154.7 L378.0,151.9 L338.0,160.5 Z M378.4,154.7 L418.3,145.9 L417.9,143.1 L378.0,151.9 Z M418.3,145.9 L458.1,137.0 L457.8,134.3 L417.9,143.1 Z M458.1,137.0 L498.0,128.2 L497.8,125.5 L457.8,134.3 Z M498.0,128.2 L537.9,119.5 L537.7,116.8 L497.8,125.5 Z M537.9,119.5 L577.9,111.3 L577.8,108.7 L537.7,116.8 Z M577.9,111.3 L618.4,105.9 L618.3,103.3 L577.8,108.7 Z M618.4,105.9 L659.2,105.0 L659.2,102.3 L618.3,103.3 Z M659.2,105.0 L700.0,107.1 L700.0,104.5 L659.2,102.3 Z M818.1,153.5 L831.7,161.1 L835.5,160.2 L821.6,152.2 Z M853.8,196.1 L794.4,246.0 L797.9,247.4 L857.2,197.0 Z M794.4,246.0 L735.9,297.2 L739.3,298.8 L797.9,247.4 Z M735.9,297.2 L676.8,347.6 L680.2,349.7 L739.3,298.8 Z M676.8,347.6 L617.6,398.1 L621.1,400.6 L680.2,349.7 Z M617.6,398.1 L559.7,449.8 L563.2,452.8 L621.1,400.6 Z M559.7,449.8 L501.9,501.8 L505.4,505.2 L563.2,452.8 Z M501.9,501.8 L443.9,553.5 L447.4,557.3 L505.4,505.2 Z M443.9,553.5 L385.8,605.1 L389.2,609.3 L447.4,557.3 Z M382.3,601.0 L365.3,617.0 L368.2,621.6 L385.8,605.1 Z M365.3,617.0 L347.7,632.5 L350.3,637.6 L368.2,621.6 Z M347.7,632.5 L329.8,647.6 L332.0,653.2 L350.3,637.6 Z M329.8,647.6 L311.8,662.4 L313.4,668.4 L332.0,653.2 Z M311.8,662.4 L290.9,672.3 L291.7,678.2 L313.4,668.4 Z M290.9,672.3 L268.9,680.0 L269.0,686.1 L291.7,678.2 Z M268.9,680.0 L245.7,681.4 L245.1,687.3 L269.0,686.1 Z M245.7,681.4 L222.3,681.2 L221.1,687.1 L245.1,687.3 Z M222.3,681.2 L199.4,677.3 L197.5,683.0 L221.1,687.1 Z M199.4,677.3 L176.6,671.7 L174.2,677.1 L197.5,683.0 Z M176.6,671.7 L155.3,662.6 L152.4,667.5 L174.2,677.1 Z M155.3,662.6 L135.0,651.0 L131.4,655.7 L152.4,667.5 Z M135.0,651.0 L116.6,636.8 L112.7,640.8 L131.4,655.7 Z M116.6,636.8 L99.8,620.6 L95.5,624.1 L112.7,640.8 Z M63.9,603.7 L58.7,585.9 L54.1,588.4 L59.3,606.6 Z M72.5,578.4 L68.3,561.5 L63.6,563.6 L67.9,580.9 Z M94.7,394.8 L138.3,365.1 L134.2,363.1 L90.2,393.3 Z" fill="#969696" stroke="#969696"/>
<path d="M299.2,175.7 L339.5,169.3 L339.0,166.4 L298.7,172.7 Z M339.5,169.3 L379.2,160.4 L378.8,157.6 L339.0,166.4 Z M379.2,160.4 L419.0,151.4 L418.6,148.6 L378.8,157.6 Z M419.0,151.4 L458.8,142.5 L458.4,139.8 L418.6,148.6 Z M458.8,142.5 L498.5,133.6 L498.3,130.9 L458.4,139.8 Z M498.5,133.6 L538.3,124.8 L538.1,122.1 L498.3,130.9 Z M538.3,124.8 L578.2,116.5 L578.1,113.9 L538.1,122.1 Z M578.2,116.5 L618.6,111.2 L618.5,108.6 L578.1,113.9 Z M618.6,111.2 L659.3,110.3 L659.3,107.6 L618.5,108.6 Z M659.3,110.3 L700.0,112.5 L700.0,109.8 L659.3,107.6 Z M730.4,121.9 L745.6,125.6 L747.0,123.2 L731.4,119.4 Z M835.5,160.2 L848.8,169.2 L853.0,168.7 L839.3,159.4 Z M839.3,159.4 L853.0,168.7 L857.1,168.1 L843.1,158.5 Z M436.9,545.9 L378.9,596.9 L382.3,601.0 L440.4,549.7 Z M385.8,605.1 L368.2,621.6 L371.2,626.2 L389.2,609.3 Z M58.7,585.9 L54.3,567.9 L49.6,570.1 L54.1,588.4 Z M99.1,396.4 L142.5,367.0 L138.3,365.1 L94.7,394.8 Z M150.7,371.0 L193.5,342.9 L189.9,340.7 L146.6,369.0 Z M193.5,342.9 L236.3,314.7 L233.3,312.4 L189.9,340.7 Z M236.3,314.7 L279.1,286.6 L276.6,284.0 L233.3,312.4 Z M279.1,286.6 L322.1,258.5 L320.1,255.8 L276.6,284.0 Z M322.1,258.5 L364.8,230.2 L363.3,227.4 L320.1,255.8 Z" fill="#979797" stroke="#979797"/>
<path d="M745.6,125.6 L760.6,129.8 L762.4,127.5 L747.0,123.2 Z M760.6,129.8 L775.4,134.7 L777.7,132.6 L762.4,127.5 Z M775.4,134.7 L789.9,140.4 L792.7,138.4 L777.7,132.6 Z M789.9,140.4 L804.2,146.6 L807.3,144.9 L792.7,138.4 Z M804.2,146.6 L818.1,153.5 L821.6,152.2 L807.3,144.9 Z M850.3,195.2 L790.8,244.6 L794.4,246.0 L853.8,196.1 Z M790.8,244.6 L732.4,295.5 L735.9,297.2 L794.4,246.0 Z M732.4,295.5 L673.3,345.5 L676.8,347.6 L735.9,297.2 Z M673.3,345.5 L614.2,395.5 L617.6,398.1 L676.8,347.6 Z M614.2,395.5 L556.1,446.8 L559.7,449.8 L617.6,398.1 Z M556.1,446.8 L498.4,498.4 L501.9,501.8 L559.7,449.8 Z M498.4,498.4 L440.4,549.7 L443.9,553.5 L501.9,501.8 Z M440.4,549.7 L382.3,601.0 L385.8,605.1 L443.9,553.5 Z M374.2,630.8 L355.5,647.9 L358.1,653.1 L377.2,635.4 Z M89.0,608.1 L82.5,592.2 L77.9,595.1 L84.5,611.3 Z M63.6,563.6 L60.6,546.0 L55.9,547.8 L58.9,565.8 Z M58.9,565.8 L55.9,547.8 L51.2,549.7 L54.3,567.9 Z M60.6,546.0 L58.8,528.2 L54.2,529.7 L55.9,547.8 Z M55.9,547.8 L54.2,529.7 L49.6,531.1 L51.2,549.7 Z M58.8,528.2 L58.0,510.4 L53.4,511.5 L54.2,529.7 Z M54.2,529.7 L53.4,511.5 L48.7,512.6 L49.6,531.1 Z M58.0,510.4 L59.1,492.6 L54.5,493.3 L53.4,511.5 Z M53.4,511.5 L54.5,493.3 L49.9,494.1 L48.7,512.6 Z M59.1,492.6 L61.5,474.9 L56.8,475.3 L54.5,493.3 Z M54.5,493.3 L56.8,475.3 L52.1,475.7 L49.9,494.1 Z M61.5,474.9 L66.6,457.8 L62.0,457.9 L56.8,475.3 Z M56.8,475.3 L62.0,457.9 L57.4,457.9 L52.1,475.7 Z M66.6,457.8 L72.3,440.9 L67.8,440.6 L62.0,457.9 Z M62.0,457.9 L67.8,440.6 L63.2,440.3 L57.4,457.9 Z M72.3,440.9 L80.9,425.4 L76.3,424.6 L67.8,440.6 Z M67.8,440.6 L76.3,424.6 L71.7,423.9 L63.2,440.3 Z M80.9,425.4 L91.8,411.3 L87.2,410.1 L76.3,424.6 Z M76.3,424.6 L87.2,410.1 L82.6,409.0 L71.7,423.9 Z M91.8,411.3 L103.6,397.9 L99.1,396.4 L87.2,410.1 Z M87.2,410.1 L99.1,396.4 L94.7,394.8 L82.6,409.0 Z M103.6,397.9 L146.6,369.0 L142.5,367.0 L99.1,396.4 Z" fill="#989898" stroke="#989898"/>
<path d="M700.0,112.5 L715.8,115.6 L716.2,113.0 L700.0,109.8 Z M700.0,107.1 L716.7,110.4 L717.2,107.8 L700.0,104.5 Z M717.2,107.8 L734.2,111.8 L735.2,109.3 L717.6,105.2 Z M828.6,149.6 L843.1,158.5 L846.9,157.7 L832.1,148.3 Z M846.9,194.3 L787.3,243.2 L790.8,244.6 L850.3,195.2 Z M787.3,243.2 L729.0,293.8 L732.4,295.5 L790.8,244.6 Z M729.0,293.8 L669.9,343.4 L673.3,345.5 L732.4,295.5 Z M669.9,343.4 L610.7,393.0 L614.2,395.5 L673.3,345.5 Z M610.7,393.0 L552.6,443.8 L556.1,446.8 L614.2,395.5 Z M552.6,443.8 L494.9,495.0 L498.4,498.4 L556.1,446.8 Z M494.9,495.0 L436.9,545.9 L440.4,549.7 L498.4,498.4 Z M77.9,595.1 L72.5,578.4 L67.9,580.9 L73.2,598.0 Z M68.6,600.8 L63.3,583.4 L58.7,585.9 L63.9,603.7 Z M63.3,583.4 L58.9,565.8 L54.3,567.9 L58.7,585.9 Z M54.3,567.9 L51.2,549.7 L46.4,551.5 L49.6,570.1 Z M51.2,549.7 L49.6,531.1 L45.0,532.6 L46.4,551.5 Z M49.6,531.1 L48.7,512.6 L44.0,513.7 L45.0,532.6 Z M48.7,512.6 L49.9,494.1 L45.3,494.8 L44.0,513.7 Z M49.9,494.1 L52.1,475.7 L47.4,476.1 L45.3,494.8 Z M52.1,475.7 L57.4,457.9 L52.9,458.0 L47.4,476.1 Z M57.4,457.9 L63.2,440.3 L58.7,440.0 L52.9,458.0 Z M63.2,440.3 L71.7,423.9 L67.1,423.1 L58.7,440.0 Z M71.7,423.9 L82.6,409.0 L78.0,407.8 L67.1,423.1 Z M82.6,409.0 L94.7,394.8 L90.2,393.3 L78.0,407.8 Z M146.6,369.0 L189.9,340.7 L186.3,338.5 L142.5,367.0 Z M189.9,340.7 L233.3,312.4 L230.2,310.0 L186.3,338.5 Z M233.3,312.4 L276.6,284.0 L274.1,281.5 L230.2,310.0 Z M276.6,284.0 L320.1,255.8 L318.1,253.2 L274.1,281.5 Z M320.1,255.8 L363.3,227.4 L361.9,224.5 L318.1,253.2 Z" fill="#999999" stroke="#999999"/>
<path d="M298.7,172.7 L339.0,166.4 L338.5,163.5 L298.1,169.6 Z M339.0,166.4 L378.8,157.6 L378.4,154.7 L338.5,163.5 Z M378.8,157.6 L418.6,148.6 L418.3,145.9 L378.4,154.7 Z M418.6,148.6 L458.4,139.8 L458.1,137.0 L418.3,145.9 Z M458.4,139.8 L498.3,130.9 L498.0,128.2 L458.1,137.0 Z M498.3,130.9 L538.1,122.1 L537.9,119.5 L498.0,128.2 Z M538.1,122.1 L578.1,113.9 L577.9,111.3 L537.9,119.5 Z M578.1,113.9 L618.5,108.6 L618.4,105.9 L577.9,111.3 Z M618.5,108.6 L659.3,107.6 L659.2,105.0 L618.4,105.9 Z M659.3,107.6 L700.0,109.8 L700.0,107.1 L659.2,105.0 Z M368.2,621.6 L350.3,637.6 L352.9,642.8 L371.2,626.2 Z M371.2,626.2 L352.9,642.8 L355.5,647.9 L374.2,630.8 Z M338.3,670.0 L318.0,686.2 L319.6,692.1 L340.4,675.6 Z M318.0,686.2 L294.0,695.8 L294.7,701.6 L319.6,692.1 Z M294.0,695.8 L269.4,704.4 L269.6,710.5 L294.7,701.6 Z M269.4,704.4 L243.5,704.9 L242.9,710.7 L269.6,710.5 Z M243.5,704.9 L217.4,704.8 L216.2,710.7 L242.9,710.7 Z M217.4,704.8 L192.0,699.9 L190.2,705.5 L216.2,710.7 Z M192.0,699.9 L166.8,693.4 L164.3,698.8 L190.2,705.5 Z M166.8,693.4 L143.5,682.3 L140.5,687.2 L164.3,698.8 Z M143.5,682.3 L120.8,669.5 L117.3,674.1 L140.5,687.2 Z M120.8,669.5 L101.0,652.8 L97.1,656.8 L117.3,674.1 Z M101.0,652.8 L82.5,634.5 L78.2,638.0 L97.1,656.8 Z M82.5,634.5 L75.6,617.7 L71.1,620.9 L78.2,638.0 Z M75.6,617.7 L68.6,600.8 L63.9,603.7 L71.1,620.9 Z M67.9,580.9 L63.6,563.6 L58.9,565.8 L63.3,583.4 Z" fill="#9a9a9a" stroke="#9a9a9a"/>
<path d="M821.6,152.2 L835.5,160.2 L839.3,159.4 L825.1,150.9 Z M350.3,637.6 L332.0,653.2 L334.1,658.8 L352.9,642.8 Z M95.5,624.1 L89.0,608.1 L84.5,611.3 L91.1,627.5 Z" fill="#9c9c9c" stroke="#9c9c9c"/>
<path d="M700.0,109.8 L716.2,113.0 L716.7,110.4 L700.0,107.1 Z M715.8,115.6 L731.4,119.4 L732.3,116.8 L716.2,113.0 Z M716.7,110.4 L733.3,114.3 L734.2,111.8 L717.2,107.8 Z M816.8,139.9 L832.1,148.3 L835.6,147.0 L820.0,138.3 Z M84.5,611.3 L77.9,595.1 L73.2,598.0 L80.0,614.5 Z M73.2,598.0 L67.9,580.9 L63.3,583.4 L68.6,600.8 Z" fill="#9d9d9d" stroke="#9d9d9d"/>
<path d="M734.2,111.8 L751.2,115.8 L752.6,113.4 L735.2,109.3 Z M352.9,642.8 L334.1,658.8 L336.2,664.4 L355.5,647.9 Z M355.5,647.9 L336.2,664.4 L338.3,670.0 L358.1,653.1 Z M332.0,653.2 L313.4,668.4 L314.9,674.3 L334.1,658.8 Z M313.4,668.4 L291.7,678.2 L292.4,684.1 L314.9,674.3 Z M291.7,678.2 L269.0,686.1 L269.1,692.2 L292.4,684.1 Z M269.0,686.1 L245.1,687.3 L244.6,693.1 L269.1,692.2 Z M245.1,687.3 L221.1,687.1 L219.9,693.0 L244.6,693.1 Z M221.1,687.1 L197.5,683.0 L195.7,688.6 L219.9,693.0 Z M197.5,683.0 L174.2,677.1 L171.7,682.6 L195.7,688.6 Z M174.2,677.1 L152.4,667.5 L149.4,672.4 L171.7,682.6 Z M152.4,667.5 L131.4,655.7 L127.9,660.3 L149.4,672.4 Z M131.4,655.7 L112.7,640.8 L108.8,644.8 L127.9,660.3 Z M112.7,640.8 L95.5,624.1 L91.1,627.5 L108.8,644.8 Z" fill="#9e9e9e" stroke="#9e9e9e"/>
<path d="M825.1,150.9 L839.3,159.4 L843.1,158.5 L828.6,149.6 Z" fill="#9f9f9f" stroke="#9f9f9f"/>
<path d="M731.4,119.4 L747.0,123.2 L748.4,120.7 L732.3,116.8 Z M751.2,115.8 L768.1,120.6 L769.9,118.3 L752.6,113.4 Z M768.1,120.6 L784.6,126.2 L786.9,124.1 L769.9,118.3 Z M784.6,126.2 L800.9,132.7 L803.6,130.7 L786.9,124.1 Z M800.9,132.7 L816.8,139.9 L820.0,138.3 L803.6,130.7 Z M80.0,614.5 L73.2,598.0 L68.6,600.8 L75.6,617.7 Z" fill="#a0a0a0" stroke="#a0a0a0"/>
<path d="M807.3,144.9 L821.6,152.2 L825.1,150.9 L810.5,143.2 Z M91.1,627.5 L84.5,611.3 L80.0,614.5 L86.8,631.0 Z" fill="#a1a1a1" stroke="#a1a1a1"/>
<path d="M716.2,113.0 L732.3,116.8 L733.3,114.3 L716.7,110.4 Z M733.3,114.3 L749.8,118.3 L751.2,115.8 L734.2,111.8 Z M747.0,123.2 L762.4,127.5 L764.3,125.2 L748.4,120.7 Z M762.4,127.5 L777.7,132.6 L780.0,130.5 L764.3,125.2 Z M777.7,132.6 L792.7,138.4 L795.4,136.5 L780.0,130.5 Z M792.7,138.4 L807.3,144.9 L810.5,143.2 L795.4,136.5 Z M813.7,141.6 L828.6,149.6 L832.1,148.3 L816.8,139.9 Z M334.1,658.8 L314.9,674.3 L316.5,680.3 L336.2,664.4 Z M314.9,674.3 L292.4,684.1 L293.2,689.9 L316.5,680.3 Z M292.4,684.1 L269.1,692.2 L269.3,698.3 L293.2,689.9 Z M269.1,692.2 L244.6,693.1 L244.0,699.0 L269.3,698.3 Z M244.6,693.1 L219.9,693.0 L218.7,698.9 L244.0,699.0 Z M219.9,693.0 L195.7,688.6 L193.9,694.3 L218.7,698.9 Z M195.7,688.6 L171.7,682.6 L169.3,688.0 L193.9,694.3 Z M171.7,682.6 L149.4,672.4 L146.4,677.4 L169.3,688.0 Z M149.4,672.4 L127.9,660.3 L124.3,664.9 L146.4,677.4 Z M127.9,660.3 L108.8,644.8 L104.9,648.8 L124.3,664.9 Z M108.8,644.8 L91.1,627.5 L86.8,631.0 L104.9,648.8 Z" fill="#a2a2a2" stroke="#a2a2a2"/>
<path d="M86.8,631.0 L80.0,614.5 L75.6,617.7 L82.5,634.5 Z" fill="#a3a3a3" stroke="#a3a3a3"/>
<path d="M336.2,664.4 L316.5,680.3 L318.0,686.2 L338.3,670.0 Z M316.5,680.3 L293.2,689.9 L294.0,695.8 L318.0,686.2 Z M293.2,689.9 L269.3,698.3 L269.4,704.4 L294.0,695.8 Z M269.3,698.3 L244.0,699.0 L243.5,704.9 L269.4,704.4 Z M244.0,699.0 L218.7,698.9 L217.4,704.8 L243.5,704.9 Z M218.7,698.9 L193.9,694.3 L192.0,699.9 L217.4,704.8 Z M193.9,694.3 L169.3,688.0 L166.8,693.4 L192.0,699.9 Z M169.3,688.0 L146.4,677.4 L143.5,682.3 L166.8,693.4 Z M146.4,677.4 L124.3,664.9 L120.8,669.5 L143.5,682.3 Z M124.3,664.9 L104.9,648.8 L101.0,652.8 L120.8,669.5 Z M104.9,648.8 L86.8,631.0 L82.5,634.5 L101.0,652.8 Z" fill="#a4a4a4" stroke="#a4a4a4"/>
<path d="M749.8,118.3 L766.2,122.9 L768.1,120.6 L751.2,115.8 Z M766.2,122.9 L782.3,128.3 L784.6,126.2 L768.1,120.6 Z M782.3,128.3 L798.1,134.6 L800.9,132.7 L784.6,126.2 Z M798.1,134.6 L813.7,141.6 L816.8,139.9 L800.9,132.7 Z" fill="#a5a5a5" stroke="#a5a5a5"/>
<path d="M732.3,116.8 L748.4,120.7 L749.8,118.3 L733.3,114.3 Z M810.5,143.2 L825.1,150.9 L828.6,149.6 L813.7,141.6 Z" fill="#a7a7a7" stroke="#a7a7a7"/>
<path d="M748.4,120.7 L764.3,125.2 L766.2,122.9 L749.8,118.3 Z M764.3,125.2 L780.0,130.5 L782.3,128.3 L766.2,122.9 Z M780.0,130.5 L795.4,136.5 L798.1,134.6 L782.3,128.3 Z M795.4,136.5 L810.5,143.2 L813.7,141.6 L798.1,134.6 Z" fill="#a9a9a9" stroke="#a9a9a9"/>
</g>
<ellipse cx="300.3" cy="177.3" rx="4.6" ry="13.6" transform="rotate(-9 300.3 177.3)" fill="#8a8a8a"/>
<path d="M297.0,163.5 L304.6,162.5 L315.4,161.0 L327.8,159.2 L340.0,157.2 L352.0,154.8 L364.6,152.0 L377.3,149.1 L390.0,146.3 L402.5,143.6 L415.1,140.9 L427.7,138.1 L440.2,135.4 L452.7,132.7 L465.1,129.9 L477.5,127.2 L490.0,124.5 L503.3,121.6 L517.1,118.6 L529.8,115.8 L540.0,113.6 L545.9,112.3 L548.8,111.5 L551.4,110.9 L556.8,109.9 L566.3,108.1 L578.1,106.0 L590.3,103.9 L601.1,102.3 L609.6,101.3 L616.9,100.8 L624.1,100.5 L632.0,100.2 L641.3,99.9 L651.2,99.7 L661.2,99.7 L670.3,99.8 L678.3,100.0 L685.7,100.4 L692.8,100.9 L700.0,101.8 L707.4,103.0 L714.8,104.6 L722.1,106.3 L729.5,108.0 L736.9,109.7 L744.3,111.3 L751.6,113.1 L759.0,115.1 L766.4,117.2 L773.7,119.5 L781.0,122.0 L788.4,124.6 L795.9,127.5 L803.6,130.7 L811.0,134.0 L817.9,137.2 L824.1,140.4 L829.8,143.5 L835.1,146.7 L840.0,149.7 L844.6,152.6 L848.8,155.5 L852.7,158.2 L856.2,160.7 L859.3,162.7 L862.0,164.4 L864.4,166.1 L866.5,168.1 L868.2,170.5 L869.6,173.2 L870.7,175.9 L871.7,178.4 L872.5,180.7 L873.2,182.9 L873.7,185.1 L873.9,187.3 L873.8,189.6 L873.4,192.0 L872.9,194.2 L872.4,196.1 L872.0,197.6 L871.6,198.9 L871.2,199.9 L871.0,200.6 L865.1,208.7 L817.9,247.8 L770.0,290.0 L740.0,317.3 L646.9,400.0 L620.0,424.3 L540.0,500.0 L474.8,560.0 L403.0,625.8 L360.0,666.5 L323.3,697.3 L270.6,716.6 L209.2,716.6 L156.6,702.9 L107.7,675.3 L73.9,641.5 L57.6,602.6 L47.1,560.0 L43.8,517.4 L46.3,479.8 L57.6,442.2 L70.1,417.1 L90.2,393.3 L120.3,372.0 L130.0,365.8 L290.0,262.9 L334.7,235.0 L346.7,226.6 L352.6,225.1 L358.5,225.8 L361.5,228.0 L363.7,231.4 L366.6,236.5 L367.7,241.7 L366.6,246.8 L363.7,250.5 L360.0,252.7 L303.4,291.4 L169.8,381.9 L130.3,407.1 L101.5,437.2 L91.4,464.7 L86.4,489.8 L85.7,514.9 L88.9,534.9 L93.3,560.0 L98.9,575.0 L112.7,610.1 L135.3,631.4 L172.9,652.7 L216.7,663.3 L261.9,664.0 L299.5,651.0 L360.0,600.1 L372.0,588.6 L474.2,500.0 L589.0,400.0 L722.8,290.0 L767.8,250.7 L817.9,209.5 L840.0,192.5 L840.1,192.5 L840.3,192.4 L840.5,192.2 L840.7,191.7 L841.1,190.7 L841.6,189.3 L842.1,187.8 L842.2,186.5 L842.0,185.4 L841.7,184.4 L841.0,183.3 L840.0,182.1 L838.7,180.7 L837.1,179.2 L835.1,177.5 L832.6,175.5 L829.8,173.3 L826.6,170.8 L822.8,168.1 L817.9,165.2 L811.6,162.0 L804.1,158.6 L796.1,155.1 L788.4,151.9 L781.0,148.9 L773.7,146.0 L766.4,143.3 L759.0,140.8 L751.6,138.5 L744.3,136.5 L736.9,134.6 L729.5,132.7 L722.1,130.8 L714.8,128.9 L707.4,127.2 L700.0,125.8 L692.8,124.9 L685.7,124.4 L678.3,124.1 L670.3,123.8 L661.2,123.5 L651.2,123.4 L641.3,123.3 L632.0,123.5 L624.1,123.8 L616.9,124.3 L609.6,125.0 L601.1,126.1 L590.3,127.7 L578.1,129.7 L566.3,131.8 L556.8,133.6 L551.4,134.8 L548.8,135.6 L545.9,136.5 L540.0,138.0 L529.8,140.3 L517.1,143.2 L503.3,146.3 L490.0,149.3 L477.5,152.1 L465.1,155.0 L452.7,157.8 L440.2,160.7 L427.7,163.6 L415.1,166.6 L402.5,169.5 L390.0,172.5 L377.2,175.6 L364.2,178.7 L351.7,181.7 L340.0,184.3 L328.8,186.5 L317.9,188.4 L308.5,189.9 L302.0,191.0 L297.5,185.0 L295.5,177.0 L295.6,169.0 Z" fill="none" stroke="#f09a30" stroke-width="2.1" stroke-linejoin="round"/>
<circle cx="430.8" cy="297.2" r="2.4" fill="#f5a235" stroke="#2a2a2a" stroke-width="0.6"/>
<ellipse cx="416.2" cy="424.3" rx="26.2" ry="16.3" transform="rotate(5 416.2 424.3)" fill="none" stroke="#0a0a0a" stroke-width="0.95"/>
<circle cx="416.2" cy="424.3" r="12.2" fill="none" stroke="#f4f4f4" stroke-width="1.9"/>
<circle cx="416.2" cy="424.3" r="12.2" fill="none" stroke="#ee1c1c" stroke-width="1.9" stroke-dasharray="4.3 5.282" stroke-dashoffset="2.15"/>
<path d="M418.4,404 L416.8,418.4 M415.4,429.2 L414,443.6" stroke="#0a0a0a" stroke-width="0.95"/>
<circle cx="960.9" cy="-2.2" r="8.7" fill="#34507a" stroke="#3b7bd6" stroke-width="1.5"/>
</svg>
</div>
<div id="gap"></div>
<div id="topgap"></div>
<div id="props"></div>
<div id="tabs"></div>
<div id="ui" style="position:absolute;left:0;top:0;width:1357px;height:751px;will-change:transform;overflow:hidden">
<!-- viewport nav gizmo buttons -->
<svg width="34" height="34" viewBox="-17 -17 34 34" style="left:978px;top:15.7px"><circle cx="0" cy="0" r="16.9" fill="#303030"/><circle cx="2.5" cy="-2.2" r="8.4" fill="#d4d4d4"/><path d="M-4.3,4.5 L-8.4,8.7" stroke="#d4d4d4" stroke-width="2.8" stroke-linecap="round"/><path d="M2.5,-6.6v8.8M-1.9,-2.2h8.8" stroke="#2b2b2b" stroke-width="1.4"/></svg>
<svg width="34" height="34" viewBox="-17 -17 34 34" style="left:978px;top:52.9px"><circle cx="0" cy="0" r="16.9" fill="#303030"/><g stroke="#d4d4d4" stroke-width="2.7" stroke-linecap="round"><path d="M-3.4,-8.2 L-3.1,1"/><path d="M1.5,-9.4 L1.5,1"/><path d="M6.3,-8.2 L5.4,1"/><path d="M10,-3.2 L7.6,2.6"/></g><path d="M-10.4,0.2 C-9.4,-1.2 -7.4,-0.8 -6.4,0.6 L-4.4,3 L-4.4,-1 L8.8,0 C8.8,6 6,10.2 1.4,10.2 C-2.6,10.2 -5,7.6 -7.4,4.2 Z" fill="#d4d4d4"/></svg>
<svg width="34" height="34" viewBox="-17 -17 34 34" style="left:978px;top:90.4px"><circle cx="0" cy="0" r="16.9" fill="#303030"/><g transform="translate(0 0.8)" fill="none" stroke="#d4d4d4" stroke-width="1.35" stroke-linejoin="round"><path d="M-5.6,0.8 A4.2,4.2 0 1 1 -1.9,-5.3 A5.8,5.8 0 1 1 3.9,0.8 Z"/><rect x="-3.7" y="3" width="8.1" height="6.4" rx="0.9"/><path d="M-7.3,4.2V8.2M-7.3,6.2H-3.7M10.2,3.4V9.2L5.6,6.3Z"/><circle cx="3.6" cy="-5.1" r="1.4" stroke-width="1"/></g><circle cx="-5.2" cy="-2.4" r="1.15" fill="#d4d4d4"/></svg>
<svg width="34" height="34" viewBox="-17 -17 34 34" style="left:978px;top:127.7px"><circle cx="0" cy="0" r="16.9" fill="#303030"/><g fill="none" stroke="#d4d4d4" stroke-width="1.6" stroke-linejoin="round"><path d="M-6,-8.2 H6.6 L10.8,7.7 H-9.8 Z"/><path d="M-1.8,-8.2 L-2.5,7.7 M2.6,-8.2 L3.8,7.7 M-7.2,-3.6 H7.8 M-8.5,1.4 H9.2"/></g></svg>

<!-- header -->
<div class="abs" style="left:1036.8px;top:7.2px;width:38.8px;height:24.8px;border-radius:5px;background:#282828;border:1px solid #404040"></div>
<svg width="40" height="24" viewBox="0 0 40 24" style="left:1037px;top:7.5px"><rect x="5" y="3.5" width="18.2" height="8" rx="4" fill="#e2e2e2"/><rect x="13" y="5.6" width="8.2" height="3.8" rx="1.9" fill="#282828"/><rect x="5" y="13.4" width="18.2" height="8" rx="4" fill="#e2e2e2"/><rect x="16.8" y="15.5" width="4.4" height="3.8" rx="1.6" fill="#282828"/><path d="M26.9,10.9 l3.9,4 l3.9,-4" fill="none" stroke="#e2e2e2" stroke-width="1.3"/></svg>
<div class="abs" style="left:1111.8px;top:7.2px;width:147.8px;height:24.8px;border-radius:4.5px;background:#1d1d1d;border:1px solid #404040"></div>
<svg width="20" height="20" viewBox="0 0 20 20" style="left:1117.6px;top:9px"><circle cx="11.8" cy="8.7" r="5.6" fill="none" stroke="#cdcdcd" stroke-width="1.4"/><path d="M7.8,12.8 L1.4,19.2" stroke="#cdcdcd" stroke-width="1.5" stroke-linecap="round"/></svg>
<div class="t" style="left:1145.7px;letter-spacing:-0.214px;top:10.4px;color:#717171">Search</div>
<div class="abs" style="left:1322.5px;top:7.2px;width:24.4px;height:24.8px;border-radius:4.5px;background:#2b2b2b;border:1px solid #3c3c3c"></div>
<svg width="24" height="24" viewBox="0 0 24 24" style="left:1322.5px;top:7.5px"><path d="M8.3,10.6 l3.9,4 l3.9,-4" fill="none" stroke="#e2e2e2" stroke-width="1.4"/></svg>

<!-- breadcrumbs -->
<svg width="18" height="18" viewBox="0 0 18 18" style="left:1074px;top:49px"><path d="M0.7,5 V2.2 Q0.7,0.7 2.2,0.7 H5 M13,0.7 H15.8 Q17.3,0.7 17.3,2.2 V5 M17.3,13 V15.8 Q17.3,17.3 15.8,17.3 H13 M5,17.3 H2.2 Q0.7,17.3 0.7,15.8 V13" fill="none" stroke="#9a9a9a" stroke-width="1.3"/><rect x="4.3" y="4.3" width="9.6" height="9.6" rx="0.8" fill="#e4e4e4"/></svg>
<div class="t" style="left:1103.7px;letter-spacing:0.177px;top:48px">Plane.001</div>
<svg width="10" height="14" viewBox="0 0 10 14" style="left:1183px;top:51px"><path d="M2.3,1.8 l5.6,5.5 l-5.6,5.5" fill="none" stroke="#d0d0d0" stroke-width="1.4"/></svg>
<svg width="20.80" height="20.80" viewBox="0 0 20 20" style="left:1202.8px;top:46.8px"><path d="M10.7,4.2 C15,4.2 17.8,6.6 17.8,10.2 C17.8,14.8 11.5,17.1 5.7,17.1" fill="none" stroke="#dcdcdc" stroke-width="1.3"/><rect x="6.8" y="2.7" width="3.3" height="3" rx="0.5" fill="#303030" stroke="#dcdcdc" stroke-width="1.2"/><rect x="1.6" y="15.4" width="3.5" height="3.3" rx="0.5" fill="#303030" stroke="#dcdcdc" stroke-width="1.2"/></svg>
<div class="t" style="left:1233.5px;letter-spacing:0.177px;top:48px">Plane.001</div>
<svg width="20" height="20" viewBox="0 0 20 20" style="left:1324.5px;top:47.5px"><g fill="none" stroke="#a0a0a0" stroke-width="1.3" stroke-linejoin="round"><path d="M12.4,1.6 L18.2,7.4 L16.6,8.4 L15.2,8 L12.6,11.4 L12.8,14 L11.4,15 L5,8.6 L6,7.2 L8.6,7.4 L12,4.8 L11.6,3.2 Z"/><path d="M8,11.8 L1.6,18.2"/></g></svg>

<!-- data block row -->
<div class="abs" style="left:1071.5px;top:90.7px;width:39.3px;height:23.6px;border-radius:4.5px 0 0 4.5px;background:#2b2b2b;border:1px solid #414141;border-right:none"></div>
<div class="abs" style="left:1110.8px;top:90.7px;width:212px;height:23.6px;background:#1d1d1d;border-top:1px solid #383838;border-bottom:1px solid #383838;border-left:1px solid #414141"></div>
<div class="abs" style="left:1322.6px;top:90.7px;width:24.5px;height:23.6px;border-radius:0 4.5px 4.5px 0;background:#545454"></div>
<svg width="20.00" height="20.00" viewBox="0 0 20 20" style="left:1076.0px;top:91.8px"><path d="M10.7,4.2 C15,4.2 17.8,6.6 17.8,10.2 C17.8,14.8 11.5,17.1 5.7,17.1" fill="none" stroke="#dcdcdc" stroke-width="1.3"/><rect x="6.8" y="2.7" width="3.3" height="3" rx="0.5" fill="#2b2b2b" stroke="#dcdcdc" stroke-width="1.2"/><rect x="1.6" y="15.4" width="3.5" height="3.3" rx="0.5" fill="#2b2b2b" stroke="#dcdcdc" stroke-width="1.2"/></svg>
<svg width="12" height="10" viewBox="0 0 12 10" style="left:1097px;top:98.6px"><path d="M2.2,3 l3.6,3.7 l3.6,-3.7" fill="none" stroke="#dcdcdc" stroke-width="1.3"/></svg>
<div class="t" style="left:1119.4px;letter-spacing:0.177px;top:92.8px">Plane.001</div>
<svg width="22.8" height="22.8" viewBox="0 0 20 20" style="left:1324.1px;top:91.6px"><path d="M10,2.6 C12.2,4 14.6,4.4 16.6,4.4 C16.8,10 15,15 10,17.6 C5,15 3.2,10 3.4,4.4 C5.4,4.4 7.8,4 10,2.6 Z" fill="none" stroke="#b4b4b4" stroke-width="1.15" stroke-linejoin="round"/></svg>

<div class="panel" style="top:127.0px;height:31px"></div>
<svg width="10" height="14" viewBox="0 0 10 14" style="left:1081.9px;top:136.4px"><path d="M2.2,1.6 l5.4,5.5 l-5.4,5.5" fill="none" stroke="#cacaca" stroke-width="1.3"/></svg>
<div class="t " style="left:1098.4px;top:133.5px;letter-spacing:-0.625px;">Shape</div>
<svg width="16" height="8" viewBox="0 0 16 8" style="left:1325px;top:139.0px"><rect x="0" y="0" width="2.1" height="2.1" fill="#b4b4b4"/><rect x="0" y="2.1" width="2.1" height="1" fill="#111"/><rect x="4" y="0" width="2.1" height="2.1" fill="#b4b4b4"/><rect x="4" y="2.1" width="2.1" height="1" fill="#111"/><rect x="8" y="0" width="2.1" height="2.1" fill="#b4b4b4"/><rect x="8" y="2.1" width="2.1" height="1" fill="#111"/><rect x="12" y="0" width="2.1" height="2.1" fill="#b4b4b4"/><rect x="12" y="2.1" width="2.1" height="1" fill="#111"/><rect x="0" y="4" width="2.1" height="2.1" fill="#b4b4b4"/><rect x="0" y="6.1" width="2.1" height="1" fill="#111"/><rect x="4" y="4" width="2.1" height="2.1" fill="#b4b4b4"/><rect x="4" y="6.1" width="2.1" height="1" fill="#111"/><rect x="8" y="4" width="2.1" height="2.1" fill="#b4b4b4"/><rect x="8" y="6.1" width="2.1" height="1" fill="#111"/><rect x="12" y="4" width="2.1" height="2.1" fill="#b4b4b4"/><rect x="12" y="6.1" width="2.1" height="1" fill="#111"/></svg>
<div class="panel" style="top:160.0px;height:31px"></div>
<svg width="10" height="14" viewBox="0 0 10 14" style="left:1081.9px;top:169.4px"><path d="M2.2,1.6 l5.4,5.5 l-5.4,5.5" fill="none" stroke="#cacaca" stroke-width="1.3"/></svg>
<div class="t " style="left:1098.4px;top:166.5px;letter-spacing:0.098px;">Texture Space</div>
<svg width="16" height="8" viewBox="0 0 16 8" style="left:1325px;top:172.0px"><rect x="0" y="0" width="2.1" height="2.1" fill="#b4b4b4"/><rect x="0" y="2.1" width="2.1" height="1" fill="#111"/><rect x="4" y="0" width="2.1" height="2.1" fill="#b4b4b4"/><rect x="4" y="2.1" width="2.1" height="1" fill="#111"/><rect x="8" y="0" width="2.1" height="2.1" fill="#b4b4b4"/><rect x="8" y="2.1" width="2.1" height="1" fill="#111"/><rect x="12" y="0" width="2.1" height="2.1" fill="#b4b4b4"/><rect x="12" y="2.1" width="2.1" height="1" fill="#111"/><rect x="0" y="4" width="2.1" height="2.1" fill="#b4b4b4"/><rect x="0" y="6.1" width="2.1" height="1" fill="#111"/><rect x="4" y="4" width="2.1" height="2.1" fill="#b4b4b4"/><rect x="4" y="6.1" width="2.1" height="1" fill="#111"/><rect x="8" y="4" width="2.1" height="2.1" fill="#b4b4b4"/><rect x="8" y="6.1" width="2.1" height="1" fill="#111"/><rect x="12" y="4" width="2.1" height="2.1" fill="#b4b4b4"/><rect x="12" y="6.1" width="2.1" height="1" fill="#111"/></svg>
<div class="panel" style="top:193.0px;height:348.6px"></div>
<div class="abs" style="left:1071px;top:408.3px;width:277px;height:102.2px;background:#363636;border-radius:0 0 5px 5px"></div>
<svg width="14" height="10" viewBox="0 0 14 10" style="left:1080.2px;top:204.2px"><path d="M1.4,2 l5.4,5.5 l5.4,-5.5" fill="none" stroke="#cacaca" stroke-width="1.3"/></svg>
<div class="t " style="left:1098.4px;top:199.5px;letter-spacing:-0.334px;">Geometry</div>
<svg width="16" height="8" viewBox="0 0 16 8" style="left:1325px;top:205.0px"><rect x="0" y="0" width="2.1" height="2.1" fill="#b4b4b4"/><rect x="0" y="2.1" width="2.1" height="1" fill="#111"/><rect x="4" y="0" width="2.1" height="2.1" fill="#b4b4b4"/><rect x="4" y="2.1" width="2.1" height="1" fill="#111"/><rect x="8" y="0" width="2.1" height="2.1" fill="#b4b4b4"/><rect x="8" y="2.1" width="2.1" height="1" fill="#111"/><rect x="12" y="0" width="2.1" height="2.1" fill="#b4b4b4"/><rect x="12" y="2.1" width="2.1" height="1" fill="#111"/><rect x="0" y="4" width="2.1" height="2.1" fill="#b4b4b4"/><rect x="0" y="6.1" width="2.1" height="1" fill="#111"/><rect x="4" y="4" width="2.1" height="2.1" fill="#b4b4b4"/><rect x="4" y="6.1" width="2.1" height="1" fill="#111"/><rect x="8" y="4" width="2.1" height="2.1" fill="#b4b4b4"/><rect x="8" y="6.1" width="2.1" height="1" fill="#111"/><rect x="12" y="4" width="2.1" height="2.1" fill="#b4b4b4"/><rect x="12" y="6.1" width="2.1" height="1" fill="#111"/></svg>
<div class="fld" style="left:1180px;top:234.8px;width:132px;background:#545454"></div>
<div class="t r " style="left:967.9px;width:200px;top:236.8px;letter-spacing:0.294px">Offset</div>
<div class="t " style="left:1179.9px;width:132.0px;text-align:center;top:236.8px;letter-spacing:-0.125px;">0 m</div>
<svg width="8" height="8" viewBox="-4 -4 8 8" style="left:1320.8px;top:242.9px"><circle r="2.75" fill="#e6e6e6"/></svg>
<div class="fld" style="left:1180px;top:261.8px;width:132px;background:#484848"></div>
<div class="t r dis" style="left:967.6px;width:200px;top:263.8px;letter-spacing:-0.041px">Extrude</div>
<div class="t dis" style="left:1179.9px;width:132.0px;text-align:center;top:263.8px;letter-spacing:-0.125px;">0 m</div>
<svg width="8" height="8" viewBox="-4 -4 8 8" style="left:1320.8px;top:269.9px"><circle r="2.75" fill="#555"/></svg>
<div class="fld" style="left:1180px;top:288.8px;width:132px;background:#1d1d1d"></div>
<div class="t r " style="left:967.7px;width:200px;top:290.8px;letter-spacing:0.074px">Taper Object</div>
<svg width="18" height="18" viewBox="0 0 18 18" style="left:1185.0px;top:291.7px"><path d="M0.7,5 V2.2 Q0.7,0.7 2.2,0.7 H5 M13,0.7 H15.8 Q17.3,0.7 17.3,2.2 V5 M17.3,13 V15.8 Q17.3,17.3 15.8,17.3 H13 M5,17.3 H2.2 Q0.7,17.3 0.7,15.8 V13" fill="none" stroke="#9a9a9a" stroke-width="1.3"/><rect x="4.3" y="4.3" width="9.6" height="9.6" rx="0.8" fill="#e4e4e4"/></svg>
<div class="t " style="left:1212.3px;top:290.8px;letter-spacing:-0.074px;color:#7a7a7a">Object</div>
<svg width="20" height="20" viewBox="0 0 20 20" style="left:1289px;top:290.5px"><path d="M1.8,18.2 L3,15 L10.6,7.4 L12.6,9.4 L5,17 Z" fill="none" stroke="#b4b4b4" stroke-width="1.2" stroke-linejoin="round"/><path d="M9.6,6.2 L13.8,10.4 M11,7.8 L14.2,4.4 a2.3,2.3 0 0 1 3.3,3.3 L14.2,11" fill="#b4b4b4" stroke="#b4b4b4" stroke-width="1.6" stroke-linecap="round" stroke-linejoin="round"/></svg>
<div class="fld" style="left:1180px;top:315.8px;width:132px;background:#282828;border:1px solid #222"></div>
<div class="t r " style="left:967.4px;width:200px;top:317.8px;letter-spacing:-0.154px">Taper Radius</div>
<div class="t " style="left:1189.4px;top:317.8px;letter-spacing:-0.179px;">Override</div>
<svg width="12" height="10" viewBox="-6 -5 12 10" style="left:1298.7px;top:323.5px"><path d="M-3.5,-1.9 L0,1.8 L3.5,-1.9" fill="none" stroke="#e2e2e2" stroke-width="1.35"/></svg>
<svg width="8" height="8" viewBox="-4 -4 8 8" style="left:1320.8px;top:323.9px"><circle r="2.75" fill="#e6e6e6"/></svg>
<div class="abs" style="left:1180px;top:345.6px;width:17.4px;height:17.6px;border-radius:3.5px;background:#494949"></div>
<div class="t dis" style="left:1200.6px;top:344.6px;letter-spacing:0.087px;">Map Taper</div>
<svg width="8" height="8" viewBox="-4 -4 8 8" style="left:1320.8px;top:350.9px"><circle r="2.75" fill="#555"/></svg>
<svg width="14" height="10" viewBox="0 0 14 10" style="left:1097.4px;top:388.6px"><path d="M1.4,2 l5.4,5.5 l5.4,-5.5" fill="none" stroke="#cacaca" stroke-width="1.3"/></svg>
<div class="t " style="left:1114.3px;top:383.9px;letter-spacing:0.256px;">Bevel</div>
<div class="abs" style="left:1081.8px;top:419px;width:255.2px;height:23px;border-radius:4.5px;background:#545454;overflow:hidden"><div class="abs" style="left:84px;top:0;width:85.4px;height:23px;background:#4772b3"></div><div class="abs" style="left:83.4px;top:0;width:1px;height:23px;background:#3f3f3f"></div><div class="abs" style="left:169.2px;top:0;width:1px;height:23px;background:#3f3f3f"></div></div>
<div class="t " style="left:1081.7px;width:84.0px;text-align:center;top:420.8px;letter-spacing:-0.278px;">Round</div>
<div class="t " style="left:1165.8px;width:85.4px;text-align:center;top:420.8px;letter-spacing:-0.074px;color:#fff">Object</div>
<div class="t " style="left:1251.3px;width:86.4px;text-align:center;top:420.8px;letter-spacing:0.190px;">Profile</div>
<div class="fld" style="left:1180px;top:449.8px;width:132px;background:#1d1d1d"></div>
<div class="t r " style="left:967.1px;width:200px;top:451.8px;letter-spacing:-0.074px">Object</div>
<svg width="18" height="18" viewBox="0 0 18 18" style="left:1185.0px;top:452.7px"><path d="M0.7,5 V2.2 Q0.7,0.7 2.2,0.7 H5 M13,0.7 H15.8 Q17.3,0.7 17.3,2.2 V5 M17.3,13 V15.8 Q17.3,17.3 15.8,17.3 H13 M5,17.3 H2.2 Q0.7,17.3 0.7,15.8 V13" fill="none" stroke="#9a9a9a" stroke-width="1.3"/><rect x="4.3" y="4.3" width="9.6" height="9.6" rx="0.8" fill="#e4e4e4"/></svg>
<div class="t " style="left:1212.3px;top:451.8px;letter-spacing:-0.074px;">Circle</div>
<svg width="14" height="14" viewBox="0 0 14 14" style="left:1292.6px;top:454.6px"><path d="M1.8,1.8 L12.2,12.2 M12.2,1.8 L1.8,12.2" stroke="#d8d8d8" stroke-width="1.3"/></svg>
<div class="abs" style="left:1180px;top:480px;width:17.4px;height:17.2px;border-radius:3.5px;background:#4772b3"></div>
<svg width="18" height="18" viewBox="0 0 18 18" style="left:1180px;top:480px"><path d="M3.6,9.2 L7.2,13 L14.4,4.6" fill="none" stroke="#fff" stroke-width="2"/></svg>
<div class="t " style="left:1200.5px;top:478.9px;letter-spacing:-0.048px;">Fill Caps</div>
<svg width="8" height="8" viewBox="-4 -4 8 8" style="left:1320.8px;top:484.8px"><circle r="2.75" fill="#e6e6e6"/></svg>
<svg width="10" height="14" viewBox="0 0 10 14" style="left:1099.8px;top:520.3px"><path d="M2.2,1.6 l5.4,5.5 l-5.4,5.5" fill="none" stroke="#cacaca" stroke-width="1.3"/></svg>
<div class="t " style="left:1115.3px;top:518.1px;letter-spacing:-0.203px;">Start &amp; End Mapping</div>
<div class="panel" style="top:544.0px;height:31px"></div>
<svg width="10" height="14" viewBox="0 0 10 14" style="left:1081.9px;top:553.4px"><path d="M2.2,1.6 l5.4,5.5 l-5.4,5.5" fill="none" stroke="#cacaca" stroke-width="1.3"/></svg>
<div class="abs" style="left:1097.2px;top:552px;width:17px;height:17.4px;border-radius:3.5px;background:#545454"></div>
<div class="t " style="left:1116.2px;top:550.6px;letter-spacing:-0.095px;">Path Animation</div>
<svg width="16" height="8" viewBox="0 0 16 8" style="left:1325px;top:556.0px"><rect x="0" y="0" width="2.1" height="2.1" fill="#b4b4b4"/><rect x="0" y="2.1" width="2.1" height="1" fill="#111"/><rect x="4" y="0" width="2.1" height="2.1" fill="#b4b4b4"/><rect x="4" y="2.1" width="2.1" height="1" fill="#111"/><rect x="8" y="0" width="2.1" height="2.1" fill="#b4b4b4"/><rect x="8" y="2.1" width="2.1" height="1" fill="#111"/><rect x="12" y="0" width="2.1" height="2.1" fill="#b4b4b4"/><rect x="12" y="2.1" width="2.1" height="1" fill="#111"/><rect x="0" y="4" width="2.1" height="2.1" fill="#b4b4b4"/><rect x="0" y="6.1" width="2.1" height="1" fill="#111"/><rect x="4" y="4" width="2.1" height="2.1" fill="#b4b4b4"/><rect x="4" y="6.1" width="2.1" height="1" fill="#111"/><rect x="8" y="4" width="2.1" height="2.1" fill="#b4b4b4"/><rect x="8" y="6.1" width="2.1" height="1" fill="#111"/><rect x="12" y="4" width="2.1" height="2.1" fill="#b4b4b4"/><rect x="12" y="6.1" width="2.1" height="1" fill="#111"/></svg>
<div class="panel" style="top:577.0px;height:31px"></div>
<svg width="10" height="14" viewBox="0 0 10 14" style="left:1081.9px;top:586.4px"><path d="M2.2,1.6 l5.4,5.5 l-5.4,5.5" fill="none" stroke="#cacaca" stroke-width="1.3"/></svg>
<div class="t " style="left:1098.6px;top:583.5px;letter-spacing:-0.070px;">Active Spline</div>
<svg width="16" height="8" viewBox="0 0 16 8" style="left:1325px;top:589.0px"><rect x="0" y="0" width="2.1" height="2.1" fill="#b4b4b4"/><rect x="0" y="2.1" width="2.1" height="1" fill="#111"/><rect x="4" y="0" width="2.1" height="2.1" fill="#b4b4b4"/><rect x="4" y="2.1" width="2.1" height="1" fill="#111"/><rect x="8" y="0" width="2.1" height="2.1" fill="#b4b4b4"/><rect x="8" y="2.1" width="2.1" height="1" fill="#111"/><rect x="12" y="0" width="2.1" height="2.1" fill="#b4b4b4"/><rect x="12" y="2.1" width="2.1" height="1" fill="#111"/><rect x="0" y="4" width="2.1" height="2.1" fill="#b4b4b4"/><rect x="0" y="6.1" width="2.1" height="1" fill="#111"/><rect x="4" y="4" width="2.1" height="2.1" fill="#b4b4b4"/><rect x="4" y="6.1" width="2.1" height="1" fill="#111"/><rect x="8" y="4" width="2.1" height="2.1" fill="#b4b4b4"/><rect x="8" y="6.1" width="2.1" height="1" fill="#111"/><rect x="12" y="4" width="2.1" height="2.1" fill="#b4b4b4"/><rect x="12" y="6.1" width="2.1" height="1" fill="#111"/></svg>
<div class="panel" style="top:610.0px;height:160px"></div>
<svg width="14" height="10" viewBox="0 0 14 10" style="left:1080.2px;top:621.2px"><path d="M1.4,2 l5.4,5.5 l5.4,-5.5" fill="none" stroke="#cacaca" stroke-width="1.3"/></svg>
<div class="t " style="left:1098.6px;top:616.3px;letter-spacing:-0.296px;">Shape Keys</div>
<svg width="16" height="8" viewBox="0 0 16 8" style="left:1325px;top:622.0px"><rect x="0" y="0" width="2.1" height="2.1" fill="#b4b4b4"/><rect x="0" y="2.1" width="2.1" height="1" fill="#111"/><rect x="4" y="0" width="2.1" height="2.1" fill="#b4b4b4"/><rect x="4" y="2.1" width="2.1" height="1" fill="#111"/><rect x="8" y="0" width="2.1" height="2.1" fill="#b4b4b4"/><rect x="8" y="2.1" width="2.1" height="1" fill="#111"/><rect x="12" y="0" width="2.1" height="2.1" fill="#b4b4b4"/><rect x="12" y="2.1" width="2.1" height="1" fill="#111"/><rect x="0" y="4" width="2.1" height="2.1" fill="#b4b4b4"/><rect x="0" y="6.1" width="2.1" height="1" fill="#111"/><rect x="4" y="4" width="2.1" height="2.1" fill="#b4b4b4"/><rect x="4" y="6.1" width="2.1" height="1" fill="#111"/><rect x="8" y="4" width="2.1" height="2.1" fill="#b4b4b4"/><rect x="8" y="6.1" width="2.1" height="1" fill="#111"/><rect x="12" y="4" width="2.1" height="2.1" fill="#b4b4b4"/><rect x="12" y="6.1" width="2.1" height="1" fill="#111"/></svg>
<div class="abs" style="left:1081.8px;top:651.8px;width:220.4px;height:97px;border-radius:4.5px;background:#2d2d2d"></div>
<svg width="10" height="8" viewBox="0 0 10 8" style="left:1094.8px;top:733.4px"><path d="M0.4,0.6 L8.4,3.9 L0.4,7.2 Z" fill="#bdbdbd"/></svg>
<svg width="16" height="8" viewBox="0 0 16 8" style="left:1197.6px;top:734.6px"><rect x="0.4" y="0.3" width="1.8" height="1.8" fill="#9a9a9a"/><rect x="3.9" y="0.3" width="1.8" height="1.8" fill="#9a9a9a"/><rect x="7.4" y="0.3" width="1.8" height="1.8" fill="#9a9a9a"/><rect x="10.9" y="0.3" width="1.8" height="1.8" fill="#9a9a9a"/><rect x="0.4" y="3.9" width="1.8" height="1.8" fill="#9a9a9a"/><rect x="3.9" y="3.9" width="1.8" height="1.8" fill="#9a9a9a"/><rect x="7.4" y="3.9" width="1.8" height="1.8" fill="#9a9a9a"/><rect x="10.9" y="3.9" width="1.8" height="1.8" fill="#9a9a9a"/></svg>
<div class="abs" style="left:1313.9px;top:652px;width:23.2px;height:48.6px;border-radius:4.5px;background:#4a4a4a;overflow:hidden"><div class="abs" style="left:0;top:0;width:24px;height:23.2px;background:#545454;border-bottom:1px solid #434343"></div></div>
<svg width="24" height="24" viewBox="0 0 24 24" style="left:1312.6px;top:651.6px"><path d="M12,6.6 V17.6 M6.5,12.1 H17.5" stroke="#dedede" stroke-width="1.4"/></svg>
<svg width="24" height="24" viewBox="0 0 24 24" style="left:1312.6px;top:676px"><path d="M6.5,12 H17.5" stroke="#686868" stroke-width="1.4"/></svg>
<div class="abs" style="left:1313.9px;top:708.9px;width:23.2px;height:23.2px;border-radius:4.5px;background:#232323"></div>
<svg width="14" height="10" viewBox="0 0 14 10" style="left:1317.8px;top:715.4px"><path d="M1.4,2 l5.4,5.5 l5.4,-5.5" fill="none" stroke="#e6e6e6" stroke-width="1.3"/></svg>
<div class="abs" style="left:1350px;top:47px;width:5.4px;height:656.5px;border-radius:3px;background:#454545"></div>
<div class="abs" style="left:1027.6px;top:414.6px;width:33.6px;height:32.6px;background:#303030;border-radius:5px 0 0 5px"></div>
<div class="abs" style="left:1030px;top:80px;width:30px;height:1px;background:#242424"></div>
<div class="abs" style="left:1030px;top:264px;width:30px;height:1px;background:#242424"></div>
<div class="abs" style="left:1030px;top:483px;width:30px;height:1px;background:#242424"></div>
<svg width="18.4" height="18.4" viewBox="0 0 18 18" style="left:1035px;top:53.7px"><path d="M3.2,0.6 V9.4" stroke="#bababa" stroke-width="1.2"/><ellipse cx="3.3" cy="13.6" rx="3.1" ry="4.2" fill="#9e9e9e"/><path d="M11.6,0.4 C9.2,1.6 8.6,4.6 10.6,6.6 L12,7.6 V16.4 a1.7,1.7 0 0 0 3.4,0 V7.6 L16.8,6.6 C18.8,4.6 18.2,1.6 15.8,0.4 V4.4 L13.7,5.4 L11.6,4.4 Z" fill="#bababa"/><circle cx="13.7" cy="16" r="0.8" fill="#1d1d1d"/></svg>
<svg width="18.4" height="18.4" viewBox="0 0 18 18" style="left:1035px;top:97.2px"><path d="M1.6,3.4 H4 L4.8,1.4 H9.6 L10.4,3.4 H16.4 a1.3,1.3 0 0 1 1.3,1.3 V15.4 a1.3,1.3 0 0 1 -1.3,1.3 H1.6 a1.3,1.3 0 0 1 -1.3,-1.3 V4.7 a1.3,1.3 0 0 1 1.3,-1.3 Z" fill="#bababa"/><rect x="13.6" y="0.8" width="2.6" height="1.6" fill="#bababa"/><rect x="2.4" y="5.6" width="9.8" height="8.8" fill="#1d1d1d"/><path d="M2.4,8.2 H12.2 M2.4,10.4 H12.2 M2.4,12.6 H12.2" stroke="#bababa" stroke-width="0.9"/><circle cx="15" cy="7.8" r="1.2" fill="#1d1d1d"/><circle cx="15" cy="12.4" r="1.2" fill="#1d1d1d"/></svg>
<svg width="18.4" height="18.4" viewBox="0 0 18 18" style="left:1035px;top:133.3px"><path d="M2.2,0.4 H15.8 a2,2 0 0 1 2,2 V8.6 H13.6 V5.2 H4.4 V8.6 H0.2 V2.4 a2,2 0 0 1 2,-2 Z" fill="#bababa"/><rect x="4.2" y="6" width="10" height="11.8" rx="0.8" fill="#8a8a8a"/><path d="M5.4,15.6 L8.8,11.2 L12.4,15.6 Z" fill="#1d1d1d"/><circle cx="12" cy="9.8" r="1" fill="#1d1d1d"/></svg>
<svg width="18.4" height="18.4" viewBox="0 0 18 18" style="left:1035px;top:168.0px"><path d="M0.6,5.4 V17.4 H12.8 M2.8,3.6 V15.2 H14.8" fill="none" stroke="#8e8e8e" stroke-width="1.2"/><rect x="5.6" y="0.8" width="11.8" height="11.8" rx="1" fill="none" stroke="#bababa" stroke-width="1.3"/><path d="M6.4,11.8 L10,4.4 L13,9.4 L14.4,8 L16.8,11.8 Z" fill="#bababa"/><rect x="13.4" y="2.8" width="2" height="2" fill="#bababa"/></svg>
<svg width="18.4" height="18.4" viewBox="0 0 18 18" style="left:1035px;top:203.0px"><path d="M5.8,0.6 L0.4,12.8 Q3.6,15.6 7.4,14.6 Q6.4,10 9.6,8 Z" fill="#bababa"/><circle cx="15.2" cy="2.6" r="2.4" fill="#bababa"/><circle cx="12.6" cy="12.6" r="4.6" fill="none" stroke="#bababa" stroke-width="1.3"/><circle cx="11.8" cy="11.2" r="1.4" fill="#8a8a8a"/></svg>
<svg width="18.4" height="18.4" viewBox="0 0 18 18" style="left:1035px;top:238.0px"><circle cx="8.6" cy="9.4" r="7.6" fill="none" stroke="#c45f6c" stroke-width="1.4"/><path d="M17.6,1 L14,4.4 M3.4,14.6 L0.6,17.4" stroke="#c45f6c" stroke-width="1.3"/><path d="M4,5 L7.4,3.4 L9.6,5 L8,7 L9.4,8.6 L6.8,10.2 L4.2,8.4 Z M9,10.6 L13,10 L14.4,12.4 L11.6,15.4 L9.6,13.6 Z" fill="#c45f6c"/></svg>
<svg width="18.4" height="18.4" viewBox="0 0 18 18" style="left:1035px;top:281.7px"><path d="M0.7,5 V2.2 Q0.7,0.7 2.2,0.7 H5 M13,0.7 H15.8 Q17.3,0.7 17.3,2.2 V5 M17.3,13 V15.8 Q17.3,17.3 15.8,17.3 H13 M5,17.3 H2.2 Q0.7,17.3 0.7,15.8 V13" fill="none" stroke="#96663a" stroke-width="1.4"/><rect x="3.8" y="4" width="10.4" height="10.4" rx="0.6" fill="#da9150"/></svg>
<svg width="18.4" height="18.4" viewBox="0 0 18 18" style="left:1035px;top:316.8px"><path d="M10.4,0.2 C6.6,0.6 4.8,4 6,7.2 L0.6,14.4 C-0.6,16.2 1.8,18.4 3.6,17 L10.2,11.2 C13.6,12.4 17.2,10.2 17.6,6.4 L14,8.4 L10.6,7.2 L9.6,4 Z" fill="#6189dc"/></svg>
<svg width="18.4" height="18.4" viewBox="0 0 18 18" style="left:1035px;top:351.8px"><circle cx="8.6" cy="9.6" r="3.8" fill="#6189dc"/><path d="M14.6,14.6 A8,8 0 1 1 11.2,2" fill="none" stroke="#6189dc" stroke-width="1.3"/><circle cx="15" cy="3.4" r="2.4" fill="#4f6fae"/></svg>
<svg width="18.4" height="18.4" viewBox="0 0 18 18" style="left:1035px;top:386.7px"><path d="M14,0.6 C16.6,-0.2 18.6,2 17.6,4.6 L13.8,13.4 C11.6,18.4 4.4,18.8 1.4,14 C-1.4,9.2 1.8,3.6 7,3 Z" fill="none" stroke="#6189dc" stroke-width="1.3"/><circle cx="6.8" cy="10.6" r="3.9" fill="none" stroke="#6189dc" stroke-width="2.2"/><circle cx="14.2" cy="3.6" r="1" fill="#b9cdf3"/></svg>
<svg width="20.8" height="20.8" viewBox="0 0 20 20" style="left:1034px;top:420px"><path d="M10.7,4.2 C15,4.2 17.8,6.6 17.8,10.2 C17.8,14.8 11.5,17.1 5.7,17.1" fill="none" stroke="#1fd1a1" stroke-width="1.4"/><rect x="6.8" y="2.7" width="3.3" height="3" rx="0.5" fill="#303030" stroke="#1fd1a1" stroke-width="1.3"/><rect x="1.6" y="15.4" width="3.5" height="3.3" rx="0.5" fill="#303030" stroke="#1fd1a1" stroke-width="1.3"/></svg>
<svg width="18.4" height="18.4" viewBox="0 0 18 18" style="left:1035px;top:457.0px"><circle cx="9" cy="9" r="8.2" fill="none" stroke="#c45f6c" stroke-width="1.3"/><path d="M9,9 V0.8 A8.2,8.2 0 0 0 0.8,9 Z M9,9 V17.2 A8.2,8.2 0 0 0 17.2,9 Z" fill="#c45f6c"/></svg>
</div>
</body>
</html>
